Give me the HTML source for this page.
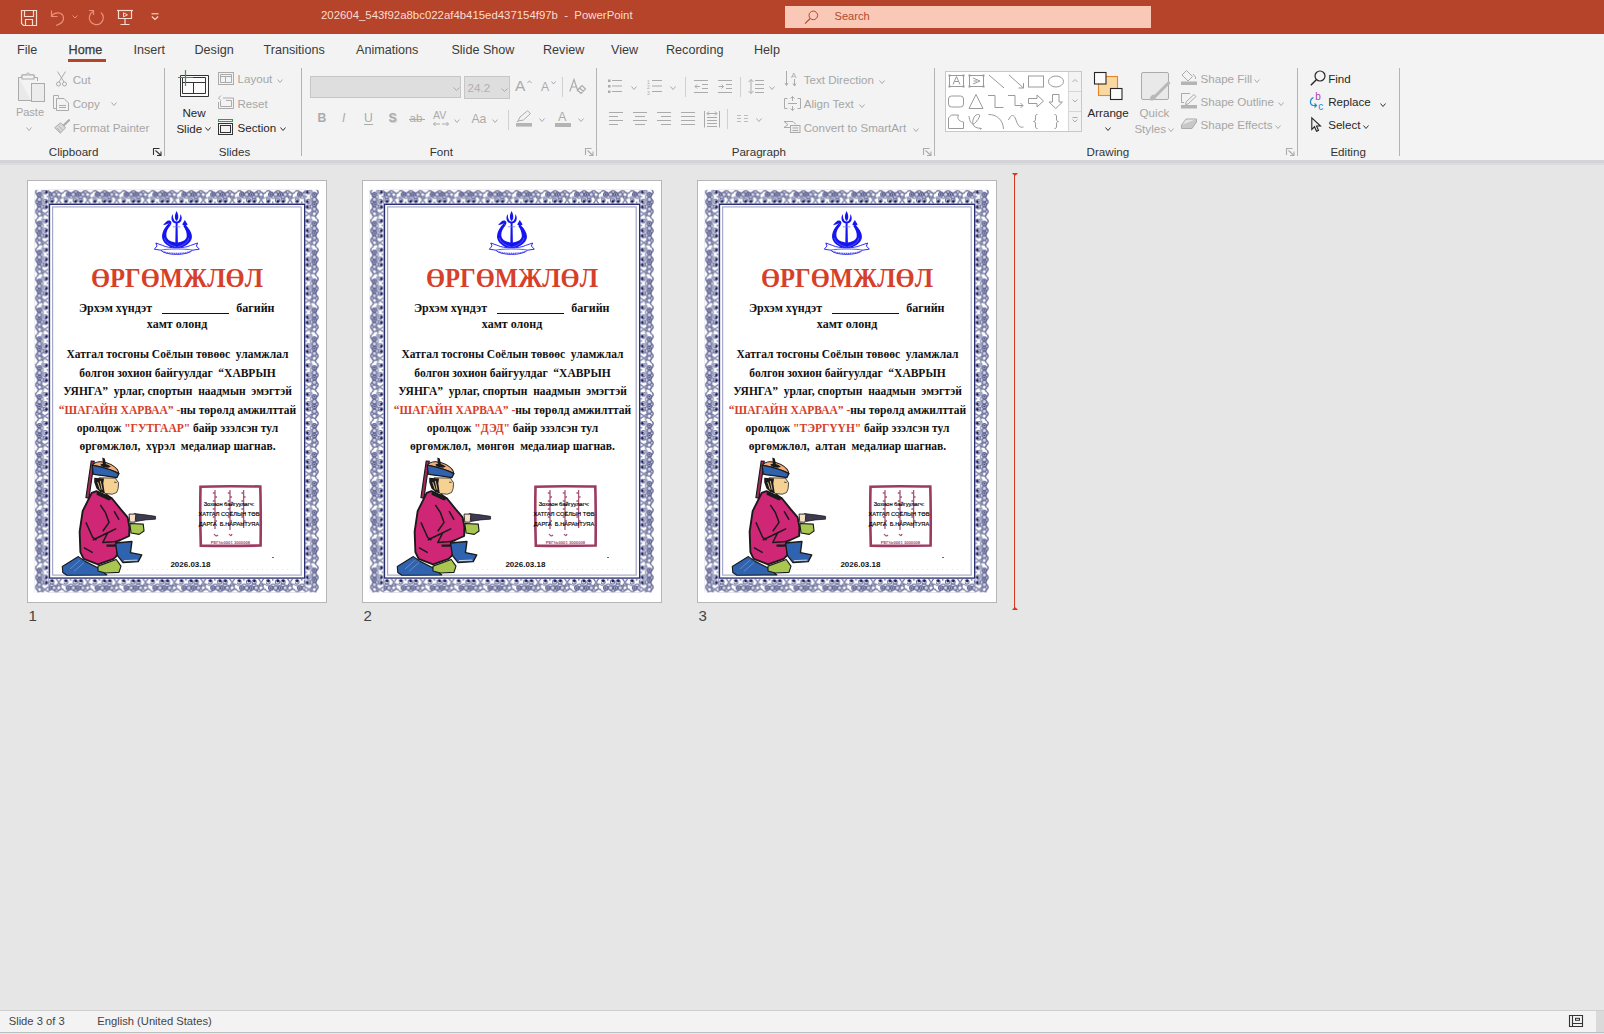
<!DOCTYPE html>
<html><head><meta charset="utf-8"><title>PowerPoint</title>
<style>
html,body{margin:0;padding:0;}
body{width:1604px;height:1034px;overflow:hidden;position:relative;background:#e6e6e6;font-family:"Liberation Sans",sans-serif;}
.t{position:absolute;white-space:pre;line-height:1;}
.r{position:absolute;}
.ic{position:absolute;overflow:visible;}
.slide{position:absolute;top:180px;width:298px;height:421px;border:1px solid #b4b4b4;background:#fff;overflow:hidden;}
.slide .t{}
</style></head><body>

<div class="r" style="left:0px;top:0px;width:1604px;height:34px;background:#b5442a;"></div>
<svg class="ic" style="left:21px;top:10px;" width="17" height="16" viewBox="0 0 17 16"><path d="M0.5 0.5 H15.5 V15.5 H2.5 L0.5 13.5 Z" fill="none" stroke="#f9dcd1" stroke-width="1.2"/><path d="M3.5 0.5 V6.5 H12.5 V0.5" fill="none" stroke="#f9dcd1" stroke-width="1.2"/><path d="M4.5 15.5 V9.5 H11.5 V15.5" fill="none" stroke="#f9dcd1" stroke-width="1.2"/></svg>
<svg class="ic" style="left:50px;top:10px;" width="16" height="16" viewBox="0 0 16 16"><path d="M1.5 6 C5 1.5 12.5 1.5 13.5 7.5 C14 11 12 13.5 6 15.5" fill="none" stroke="#ec8f7c" stroke-width="1.2"/><path d="M1.5 0.5 V6.5 H7.5" fill="none" stroke="#ec8f7c" stroke-width="1.2"/></svg>
<svg class="ic" style="left:71.5px;top:14.5px;" width="6" height="4" viewBox="0 0 6 4"><path d="M0.5 0.5 L3 3 L5.5 0.5" fill="none" stroke="#ec8f7c" stroke-width="1"/></svg>
<svg class="ic" style="left:88px;top:9.5px;" width="18" height="17" viewBox="0 0 18 17"><path d="M5 1.5 A7 7 0 1 0 13 2.5" fill="none" stroke="#ec8f7c" stroke-width="1.2"/><path d="M1 0.5 H5.5 V5" fill="none" stroke="#ec8f7c" stroke-width="1.2"/></svg>
<svg class="ic" style="left:117px;top:10px;" width="17" height="16" viewBox="0 0 17 16"><path d="M0 0.5 H16" stroke="#f9dcd1" stroke-width="1.2"/><path d="M1.5 0.5 V8.5 H14.5 V0.5" fill="none" stroke="#f9dcd1" stroke-width="1.2"/><path d="M6.5 2.8 L10.5 4.8 L6.5 6.8 Z" fill="none" stroke="#f9dcd1" stroke-width="1"/><path d="M8 8.5 V14 M3.5 14.5 H12.5" stroke="#f9dcd1" stroke-width="1.2"/></svg>
<svg class="ic" style="left:151px;top:13px;" width="8" height="8" viewBox="0 0 8 8"><path d="M0.5 0.8 H7.5" stroke="#f9dcd1" stroke-width="1.1"/><path d="M0.8 3.5 L4 6.5 L7.2 3.5" fill="none" stroke="#f9dcd1" stroke-width="1.1"/></svg>
<div class="t" style="left:321px;top:10.35px;font-size:11.4px;color:#f9dcd1;font-weight:400;font-family:'Liberation Sans', sans-serif;">202604_543f92a8bc022af4b415ed437154f97b  -  PowerPoint</div>
<div class="r" style="left:785px;top:6px;width:366px;height:22px;background:#f9c8b6;"></div>
<svg class="ic" style="left:804px;top:10px;" width="15" height="14" viewBox="0 0 15 14"><circle cx="9.3" cy="5.4" r="4.3" fill="none" stroke="#b04a30" stroke-width="1"/><path d="M6.2 8.5 L1 13.6" stroke="#b04a30" stroke-width="1.1"/></svg>
<div class="t" style="left:834.5px;top:11.40px;font-size:11.1px;color:#b04a30;font-weight:400;font-family:'Liberation Sans', sans-serif;">Search</div>
<div class="r" style="left:0px;top:34px;width:1604px;height:126px;background:#f3f3f3;"></div>
<div class="r" style="left:0px;top:160px;width:1604px;height:3px;background:#d3d3d8;"></div>
<div class="r" style="left:0px;top:163px;width:1604px;height:2px;background:#dcdcdc;"></div>
<div class="t" style="left:17px;top:43.93px;font-size:12.6px;color:#3b3b3b;font-weight:400;font-family:'Liberation Sans', sans-serif;">File</div>
<div class="t" style="left:68.6px;top:43.93px;font-size:12.6px;color:#3b3b3b;font-weight:400;font-family:'Liberation Sans', sans-serif;-webkit-text-stroke:0.25px #333;">Home</div>
<div class="t" style="left:133.4px;top:43.93px;font-size:12.6px;color:#3b3b3b;font-weight:400;font-family:'Liberation Sans', sans-serif;">Insert</div>
<div class="t" style="left:194.5px;top:43.93px;font-size:12.6px;color:#3b3b3b;font-weight:400;font-family:'Liberation Sans', sans-serif;">Design</div>
<div class="t" style="left:263.6px;top:43.93px;font-size:12.6px;color:#3b3b3b;font-weight:400;font-family:'Liberation Sans', sans-serif;">Transitions</div>
<div class="t" style="left:356px;top:43.93px;font-size:12.6px;color:#3b3b3b;font-weight:400;font-family:'Liberation Sans', sans-serif;">Animations</div>
<div class="t" style="left:451.4px;top:43.93px;font-size:12.6px;color:#3b3b3b;font-weight:400;font-family:'Liberation Sans', sans-serif;">Slide Show</div>
<div class="t" style="left:543px;top:43.93px;font-size:12.6px;color:#3b3b3b;font-weight:400;font-family:'Liberation Sans', sans-serif;">Review</div>
<div class="t" style="left:611px;top:43.93px;font-size:12.6px;color:#3b3b3b;font-weight:400;font-family:'Liberation Sans', sans-serif;">View</div>
<div class="t" style="left:666px;top:43.93px;font-size:12.6px;color:#3b3b3b;font-weight:400;font-family:'Liberation Sans', sans-serif;">Recording</div>
<div class="t" style="left:754px;top:43.93px;font-size:12.6px;color:#3b3b3b;font-weight:400;font-family:'Liberation Sans', sans-serif;">Help</div>
<div class="r" style="left:68.2px;top:59.2px;width:37.8px;height:2.8px;background:#b5442a;"></div>
<div class="r" style="left:164.0px;top:68px;width:1px;height:88px;background:#b4b4b4;"></div>
<div class="r" style="left:301.0px;top:68px;width:1px;height:88px;background:#b4b4b4;"></div>
<div class="r" style="left:595.9px;top:68px;width:1px;height:88px;background:#b4b4b4;"></div>
<div class="r" style="left:933.9px;top:68px;width:1px;height:88px;background:#b4b4b4;"></div>
<div class="r" style="left:1297.0px;top:68px;width:1px;height:88px;background:#b4b4b4;"></div>
<div class="r" style="left:1399.3px;top:68px;width:1px;height:88px;background:#b4b4b4;"></div>
<div class="t" style="left:48.8px;top:145.98px;font-size:11.6px;color:#333333;font-weight:400;font-family:'Liberation Sans', sans-serif;">Clipboard</div>
<div class="t" style="left:218.7px;top:145.98px;font-size:11.6px;color:#333333;font-weight:400;font-family:'Liberation Sans', sans-serif;">Slides</div>
<div class="t" style="left:429.7px;top:145.98px;font-size:11.6px;color:#333333;font-weight:400;font-family:'Liberation Sans', sans-serif;">Font</div>
<div class="t" style="left:731.7px;top:145.98px;font-size:11.6px;color:#333333;font-weight:400;font-family:'Liberation Sans', sans-serif;">Paragraph</div>
<div class="t" style="left:1086.6px;top:145.98px;font-size:11.6px;color:#333333;font-weight:400;font-family:'Liberation Sans', sans-serif;">Drawing</div>
<div class="t" style="left:1330.4px;top:145.98px;font-size:11.6px;color:#333333;font-weight:400;font-family:'Liberation Sans', sans-serif;">Editing</div>
<svg class="ic" style="left:153px;top:148px;" width="9" height="8" viewBox="0 0 9 8"><path d="M0.5 7 V0.5 H6.5" fill="none" stroke="#333" stroke-width="1.1"/><path d="M2.5 2.5 L8 7.5 M4 7.5 H8 V3.5" fill="none" stroke="#333" stroke-width="1.1"/></svg>
<svg class="ic" style="left:585px;top:148px;" width="9" height="8" viewBox="0 0 9 8"><path d="M0.5 7 V0.5 H6.5" fill="none" stroke="#ababab" stroke-width="1.1"/><path d="M2.5 2.5 L8 7.5 M4 7.5 H8 V3.5" fill="none" stroke="#ababab" stroke-width="1.1"/></svg>
<svg class="ic" style="left:923.2px;top:148px;" width="9" height="8" viewBox="0 0 9 8"><path d="M0.5 7 V0.5 H6.5" fill="none" stroke="#ababab" stroke-width="1.1"/><path d="M2.5 2.5 L8 7.5 M4 7.5 H8 V3.5" fill="none" stroke="#ababab" stroke-width="1.1"/></svg>
<svg class="ic" style="left:1286px;top:148px;" width="9" height="8" viewBox="0 0 9 8"><path d="M0.5 7 V0.5 H6.5" fill="none" stroke="#ababab" stroke-width="1.1"/><path d="M2.5 2.5 L8 7.5 M4 7.5 H8 V3.5" fill="none" stroke="#ababab" stroke-width="1.1"/></svg>
<svg class="ic" style="left:18px;top:72px;" width="28" height="30" viewBox="0 0 28 30"><path d="M0.5 5.5 H4 V3 H8 C8 0.5 12 0.5 12 3 H16 V5.5 H19.5 V9" fill="none" stroke="#ababab" stroke-width="1"/><path d="M0.5 5.5 V28.5 H13" fill="#e9e9e9" stroke="#ababab" stroke-width="1"/><rect x="4" y="3" width="12" height="4" fill="#f3f3f3" stroke="#ababab" stroke-width="1"/><rect x="13.5" y="11.5" width="13" height="18" fill="#ececec" stroke="#ababab" stroke-width="1"/></svg>
<div class="t" style="left:15.9px;top:107.29px;font-size:11.0px;color:#a6a6a6;font-weight:400;font-family:'Liberation Sans', sans-serif;">Paste</div>
<svg class="ic" style="left:26px;top:127px;" width="6" height="4" viewBox="0 0 6 4"><path d="M0.5 0.5 L3.0 3.5 L5.5 0.5" fill="none" stroke="#ababab" stroke-width="1"/></svg>
<svg class="ic" style="left:56px;top:71px;" width="11" height="16" viewBox="0 0 11 16"><path d="M1.5 0.5 L8 11 M9.5 0.5 L3 11" stroke="#ababab" stroke-width="1" fill="none"/><circle cx="2.5" cy="13" r="2" fill="none" stroke="#ababab" stroke-width="1"/><circle cx="8.5" cy="13" r="2" fill="none" stroke="#ababab" stroke-width="1"/></svg>
<div class="t" style="left:72.7px;top:73.88px;font-size:11.6px;color:#a6a6a6;font-weight:400;font-family:'Liberation Sans', sans-serif;">Cut</div>
<svg class="ic" style="left:53px;top:95px;" width="16" height="16" viewBox="0 0 16 16"><path d="M5.5 2.5 V0.5 H0.5 V13.5 H3.5" fill="none" stroke="#ababab" stroke-width="1"/><path d="M3.5 3.5 H11 L15.5 8 V15.5 H3.5 Z" fill="none" stroke="#ababab" stroke-width="1"/><path d="M6 10.5 H13 M6 12.5 H13" stroke="#ababab" stroke-width="1"/></svg>
<div class="t" style="left:72.7px;top:97.78px;font-size:11.6px;color:#a6a6a6;font-weight:400;font-family:'Liberation Sans', sans-serif;">Copy</div>
<svg class="ic" style="left:111.3px;top:102px;" width="6" height="4" viewBox="0 0 6 4"><path d="M0.5 0.5 L3.0 3.5 L5.5 0.5" fill="none" stroke="#ababab" stroke-width="1"/></svg>
<svg class="ic" style="left:53.5px;top:119px;" width="16" height="15" viewBox="0 0 16 15"><path d="M15 1.2 L9.5 6.5" stroke="#ababab" stroke-width="2.2" stroke-linecap="round"/><path d="M0.8 8.6 L6.6 3.8 L11.6 8.8 L6.2 14.2 Z" fill="#d9d9d9" stroke="#ababab" stroke-width="1"/><path d="M3 9 L6.8 12.6 M4.8 7.2 L8.6 10.8" stroke="#ababab" stroke-width="0.8"/></svg>
<div class="t" style="left:72.7px;top:121.58px;font-size:11.6px;color:#a6a6a6;font-weight:400;font-family:'Liberation Sans', sans-serif;">Format Painter</div>
<svg class="ic" style="left:177px;top:70px;" width="33" height="28" viewBox="0 0 33 28"><path d="M3.5 5.5 H31.5 V26.5 H3.5 Z" fill="#fbfbfb" stroke="#333" stroke-width="1"/><path d="M5.5 7.5 H28.5 V23.5 H5.5 Z M5.5 12.5 H28.5 M16.5 12.5 V23.5" fill="none" stroke="#333" stroke-width="1"/><path d="M8.5 0 V16 M1 7.5 H16" stroke="#2e9b4e" stroke-width="1.2"/></svg>
<div class="t" style="left:182.4px;top:106.78px;font-size:11.6px;color:#262626;font-weight:400;font-family:'Liberation Sans', sans-serif;">New</div>
<div class="t" style="left:176.4px;top:122.78px;font-size:11.6px;color:#262626;font-weight:400;font-family:'Liberation Sans', sans-serif;">Slide</div>
<svg class="ic" style="left:205px;top:127.3px;" width="6" height="4" viewBox="0 0 6 4"><path d="M0.5 0.5 L3.0 3.5 L5.5 0.5" fill="none" stroke="#333" stroke-width="1"/></svg>
<svg class="ic" style="left:218px;top:72px;" width="17" height="14" viewBox="0 0 17 14"><rect x="0.5" y="0.5" width="15" height="12" fill="none" stroke="#ababab" stroke-width="1"/><path d="M2.5 2.5 H13.5 V10.5 H2.5 Z M2.5 4.5 H13.5 M7.5 4.5 V10.5" fill="none" stroke="#ababab" stroke-width="1"/></svg>
<div class="t" style="left:237.5px;top:73.48px;font-size:11.6px;color:#a6a6a6;font-weight:400;font-family:'Liberation Sans', sans-serif;">Layout</div>
<svg class="ic" style="left:277px;top:79px;" width="6" height="4" viewBox="0 0 6 4"><path d="M0.5 0.5 L3.0 3.5 L5.5 0.5" fill="none" stroke="#ababab" stroke-width="1"/></svg>
<svg class="ic" style="left:218px;top:95px;" width="17" height="15" viewBox="0 0 17 15"><path d="M5 3 H15.5 V13.5 H0.5 V7" fill="none" stroke="#ababab" stroke-width="1"/><path d="M2.5 6 V11.5 H13.5 V5.5 H8" fill="none" stroke="#ababab" stroke-width="1"/><path d="M3 0.5 L0.5 3 L3 5.5" fill="none" stroke="#ababab" stroke-width="1"/></svg>
<div class="t" style="left:237.5px;top:97.58px;font-size:11.6px;color:#a6a6a6;font-weight:400;font-family:'Liberation Sans', sans-serif;">Reset</div>
<svg class="ic" style="left:218px;top:119px;" width="16" height="16" viewBox="0 0 16 16"><rect x="0.5" y="0.5" width="14" height="2" fill="none" stroke="#2e9b4e" stroke-width="1"/><rect x="0.5" y="4.5" width="14" height="11" fill="none" stroke="#333" stroke-width="1"/><rect x="2.5" y="6.5" width="10" height="7" fill="none" stroke="#333" stroke-width="1"/></svg>
<div class="t" style="left:237.5px;top:121.78px;font-size:11.6px;color:#262626;font-weight:400;font-family:'Liberation Sans', sans-serif;">Section</div>
<svg class="ic" style="left:280px;top:127px;" width="6" height="4" viewBox="0 0 6 4"><path d="M0.5 0.5 L3.0 3.5 L5.5 0.5" fill="none" stroke="#333" stroke-width="1"/></svg>
<div class="r" style="left:310px;top:76px;width:151px;height:22px;background:#dedede;border:1px solid #c6c6c6;box-sizing:border-box;"></div>
<svg class="ic" style="left:452.6px;top:87px;" width="7" height="4" viewBox="0 0 7 4"><path d="M0.5 0.5 L3.5 3.5 L6.5 0.5" fill="none" stroke="#ababab" stroke-width="1"/></svg>
<div class="r" style="left:464px;top:76px;width:46px;height:22.5px;background:#dedede;border:1px solid #c6c6c6;box-sizing:border-box;"></div>
<div class="t" style="left:467.6px;top:81.68px;font-size:11.6px;color:#b0b0b0;font-weight:400;font-family:'Liberation Sans', sans-serif;">24.2</div>
<svg class="ic" style="left:500.5px;top:87.5px;" width="7" height="4" viewBox="0 0 7 4"><path d="M0.5 0.5 L3.5 3.5 L6.5 0.5" fill="none" stroke="#ababab" stroke-width="1"/></svg>
<div class="t" style="left:515px;top:78.38px;font-size:15.5px;color:#ababab;font-weight:400;font-family:'Liberation Sans', sans-serif;">A</div>
<svg class="ic" style="left:527px;top:80px;" width="5" height="4" viewBox="0 0 5 4"><path d="M0.5 3 L2.5 0.8 L4.5 3" fill="none" stroke="#ababab" stroke-width="1"/></svg>
<div class="t" style="left:541px;top:81.17px;font-size:12.2px;color:#ababab;font-weight:400;font-family:'Liberation Sans', sans-serif;">A</div>
<svg class="ic" style="left:550.5px;top:81px;" width="5" height="3.5" viewBox="0 0 5 3.5"><path d="M0.5 0.5 L2.5 3.0 L4.5 0.5" fill="none" stroke="#ababab" stroke-width="1"/></svg>
<div class="r" style="left:562px;top:77px;width:1px;height:20px;background:#d0d0d0;"></div>
<svg class="ic" style="left:569px;top:79px;" width="18" height="16" viewBox="0 0 18 16"><path d="M0.8 12.5 L5 0.5 L9 12.5 M2.3 8 H7.5" fill="none" stroke="#ababab" stroke-width="1.2"/><path d="M8.5 11 L13 6.5 L16.5 10 L12 14.5 Z M10.5 9 L14.5 12.5" fill="none" stroke="#ababab" stroke-width="1.2"/></svg>
<div class="t" style="left:317.5px;top:111.97px;font-size:12.2px;color:#ababab;font-weight:700;font-family:'Liberation Sans', sans-serif;">B</div>
<div class="t" style="left:342px;top:111.97px;font-size:12.2px;color:#ababab;font-weight:400;font-family:'Liberation Sans', sans-serif;font-style:italic;">I</div>
<div class="t" style="left:364px;top:111.97px;font-size:12.2px;color:#ababab;font-weight:400;font-family:'Liberation Sans', sans-serif;">U</div>
<div class="r" style="left:364px;top:124px;width:9px;height:1px;background:#ababab;"></div>
<div class="t" style="left:388.5px;top:112.17px;font-size:12.2px;color:#ababab;font-weight:700;font-family:'Liberation Sans', sans-serif;text-shadow:1px 1px 1px #d0d0d0;">S</div>
<div class="t" style="left:409.5px;top:112.48px;font-size:11.6px;color:#ababab;font-weight:400;font-family:'Liberation Sans', sans-serif;">ab</div>
<div class="r" style="left:409px;top:119px;width:16px;height:1px;background:#ababab;"></div>
<div class="t" style="left:433px;top:110.03px;font-size:10.6px;color:#ababab;font-weight:400;font-family:'Liberation Sans', sans-serif;">AV</div>
<svg class="ic" style="left:433px;top:121px;" width="16" height="6" viewBox="0 0 16 6"><path d="M0.5 3 H7 M0.5 3 L2.5 1 M0.5 3 L2.5 5 M9 3 H15.5 M15.5 3 L13.5 1 M15.5 3 L13.5 5" fill="none" stroke="#ababab" stroke-width="1"/></svg>
<svg class="ic" style="left:454px;top:118.5px;" width="6" height="4" viewBox="0 0 6 4"><path d="M0.5 0.5 L3.0 3.5 L5.5 0.5" fill="none" stroke="#ababab" stroke-width="1"/></svg>
<div class="t" style="left:471.4px;top:113.07px;font-size:12.2px;color:#ababab;font-weight:400;font-family:'Liberation Sans', sans-serif;">Aa</div>
<svg class="ic" style="left:491.7px;top:118.5px;" width="6" height="4" viewBox="0 0 6 4"><path d="M0.5 0.5 L3.0 3.5 L5.5 0.5" fill="none" stroke="#ababab" stroke-width="1"/></svg>
<div class="r" style="left:508px;top:110px;width:1px;height:20px;background:#d0d0d0;"></div>
<svg class="ic" style="left:516px;top:110px;" width="17" height="17" viewBox="0 0 17 17"><path d="M2 11 L4 7 L11.5 0.8 L14.5 3.5 L7.5 10 Z" fill="none" stroke="#ababab" stroke-width="1"/><path d="M2 11 L1 12" stroke="#ababab" stroke-width="1"/><rect x="0" y="13" width="16" height="3.6" fill="#b4b4b4"/></svg>
<svg class="ic" style="left:538.7px;top:118px;" width="6" height="4" viewBox="0 0 6 4"><path d="M0.5 0.5 L3.0 3.5 L5.5 0.5" fill="none" stroke="#ababab" stroke-width="1"/></svg>
<div class="t" style="left:558px;top:110.83px;font-size:12.6px;color:#ababab;font-weight:400;font-family:'Liberation Sans', sans-serif;">A</div>
<div class="r" style="left:555px;top:123px;width:16px;height:3.6px;background:#b4b4b4;"></div>
<svg class="ic" style="left:577.8px;top:118px;" width="6" height="4" viewBox="0 0 6 4"><path d="M0.5 0.5 L3.0 3.5 L5.5 0.5" fill="none" stroke="#ababab" stroke-width="1"/></svg>
<svg class="ic" style="left:608px;top:79px;" width="16" height="15" viewBox="0 0 16 15"><rect x="0" y="0.5" width="2.5" height="2.5" fill="#ababab"/><rect x="0" y="6" width="2.5" height="2.5" fill="#ababab"/><rect x="0" y="11.5" width="2.5" height="2.5" fill="#ababab"/><path d="M4 1.5 H14" stroke="#ababab" stroke-width="1"/><path d="M4 7 H14" stroke="#ababab" stroke-width="1"/><path d="M4 12.5 H14" stroke="#ababab" stroke-width="1"/></svg>
<svg class="ic" style="left:630.7px;top:86px;" width="6" height="4" viewBox="0 0 6 4"><path d="M0.5 0.5 L3.0 3.5 L5.5 0.5" fill="none" stroke="#ababab" stroke-width="1"/></svg>
<svg class="ic" style="left:647px;top:79px;" width="16" height="16" viewBox="0 0 16 16"><text x="0" y="4.5" font-size="5" fill="#ababab" font-family="Liberation Sans">1</text><text x="0" y="10" font-size="5" fill="#ababab" font-family="Liberation Sans">2</text><text x="0" y="15.5" font-size="5" fill="#ababab" font-family="Liberation Sans">3</text><path d="M5 1.5 H15" stroke="#ababab" stroke-width="1"/><path d="M5 7 H15" stroke="#ababab" stroke-width="1"/><path d="M5 12.5 H15" stroke="#ababab" stroke-width="1"/></svg>
<svg class="ic" style="left:669.6px;top:86px;" width="6" height="4" viewBox="0 0 6 4"><path d="M0.5 0.5 L3.0 3.5 L5.5 0.5" fill="none" stroke="#ababab" stroke-width="1"/></svg>
<div class="r" style="left:685px;top:77px;width:1px;height:20px;background:#d0d0d0;"></div>
<svg class="ic" style="left:694px;top:80px;" width="15" height="14" viewBox="0 0 15 14"><path d="M0 0.5 H14" stroke="#ababab" stroke-width="1"/><path d="M0 12.5 H14" stroke="#ababab" stroke-width="1"/><path d="M8 4.5 H14" stroke="#ababab" stroke-width="1"/><path d="M8 8.5 H14" stroke="#ababab" stroke-width="1"/><path d="M6 6.5 H1 M3 4.5 L1 6.5 L3 8.5" fill="none" stroke="#ababab" stroke-width="1"/></svg>
<svg class="ic" style="left:718px;top:80px;" width="15" height="14" viewBox="0 0 15 14"><path d="M0 0.5 H14" stroke="#ababab" stroke-width="1"/><path d="M0 12.5 H14" stroke="#ababab" stroke-width="1"/><path d="M8 4.5 H14" stroke="#ababab" stroke-width="1"/><path d="M8 8.5 H14" stroke="#ababab" stroke-width="1"/><path d="M0.5 6.5 H5.5 M3.5 4.5 L5.5 6.5 L3.5 8.5" fill="none" stroke="#ababab" stroke-width="1"/></svg>
<div class="r" style="left:740px;top:77px;width:1px;height:20px;background:#d0d0d0;"></div>
<svg class="ic" style="left:747.5px;top:79px;" width="17" height="16" viewBox="0 0 17 16"><path d="M7 1.5 H16" stroke="#ababab" stroke-width="1"/><path d="M7 5.5 H16" stroke="#ababab" stroke-width="1"/><path d="M7 9.5 H16" stroke="#ababab" stroke-width="1"/><path d="M7 13.5 H16" stroke="#ababab" stroke-width="1"/><path d="M3 0.5 V14.5 M0.5 3 L3 0.5 L5.5 3 M0.5 12 L3 14.5 L5.5 12" fill="none" stroke="#ababab" stroke-width="1"/></svg>
<svg class="ic" style="left:768.7px;top:86px;" width="6" height="4" viewBox="0 0 6 4"><path d="M0.5 0.5 L3.0 3.5 L5.5 0.5" fill="none" stroke="#ababab" stroke-width="1"/></svg>
<svg class="ic" style="left:609px;top:112px;" width="14" height="13" viewBox="0 0 14 13"><path d="M0 0.5 H14 M0 4.5 H9 M0 8.5 H14 M0 12.5 H9" stroke="#ababab" stroke-width="1"/></svg>
<svg class="ic" style="left:633px;top:112px;" width="14" height="13" viewBox="0 0 14 13"><path d="M0 0.5 H14 M2 4.5 H12 M0 8.5 H14 M2 12.5 H12" stroke="#ababab" stroke-width="1"/></svg>
<svg class="ic" style="left:657px;top:112px;" width="14" height="13" viewBox="0 0 14 13"><path d="M0 0.5 H14 M4 4.5 H14 M0 8.5 H14 M4 12.5 H14" stroke="#ababab" stroke-width="1"/></svg>
<svg class="ic" style="left:681px;top:112px;" width="14" height="13" viewBox="0 0 14 13"><path d="M0 0.5 H14 M0 4.5 H14 M0 8.5 H14 M0 12.5 H14" stroke="#ababab" stroke-width="1"/></svg>
<svg class="ic" style="left:704px;top:110.5px;" width="17" height="17" viewBox="0 0 17 17"><path d="M0.5 0 V16.5 M15.5 0 V16.5 M3 6.5 H13 M3 9.5 H13 M3 12.5 H13 M3 15.5 H13 M3 2.5 H13 M3 2.5 L5 0.5 M3 2.5 L5 4.5 M13 2.5 L11 0.5 M13 2.5 L11 4.5" fill="none" stroke="#ababab" stroke-width="1"/></svg>
<div class="r" style="left:727px;top:109px;width:1px;height:20px;background:#d0d0d0;"></div>
<svg class="ic" style="left:737px;top:115px;" width="12" height="7" viewBox="0 0 12 7"><path d="M0 0.5 H4 M0 3.5 H4 M0 6.5 H4 M7 0.5 H11 M7 3.5 H11 M7 6.5 H11" stroke="#bdbdbd" stroke-width="1"/></svg>
<svg class="ic" style="left:755.5px;top:118px;" width="6" height="4" viewBox="0 0 6 4"><path d="M0.5 0.5 L3.0 3.5 L5.5 0.5" fill="none" stroke="#ababab" stroke-width="1"/></svg>
<svg class="ic" style="left:785px;top:71px;" width="15" height="16" viewBox="0 0 15 16"><path d="M1.5 0 V14.5 M0 12 L1.5 14.5 L3 12" fill="none" stroke="#ababab" stroke-width="1"/><text x="6" y="7" font-size="8" fill="#ababab" font-family="Liberation Sans">A</text><path d="M9.5 8 V15 M8 12.5 L9.5 15 L11 12.5" fill="none" stroke="#ababab" stroke-width="1"/></svg>
<div class="t" style="left:803.7px;top:73.68px;font-size:11.6px;color:#a6a6a6;font-weight:400;font-family:'Liberation Sans', sans-serif;">Text Direction</div>
<svg class="ic" style="left:879.4px;top:79.5px;" width="6" height="4" viewBox="0 0 6 4"><path d="M0.5 0.5 L3.0 3.5 L5.5 0.5" fill="none" stroke="#ababab" stroke-width="1"/></svg>
<svg class="ic" style="left:783.5px;top:95.5px;" width="17" height="15" viewBox="0 0 17 15"><path d="M3.5 2.5 H0.5 V12.5 H3.5 M13.5 2.5 H16.5 V12.5 H13.5 M4 7.5 H13" fill="none" stroke="#ababab" stroke-width="1"/><path d="M8.5 0.5 V5 M6.5 2.5 L8.5 0.5 L10.5 2.5 M8.5 10 V14.5 M6.5 12.5 L8.5 14.5 L10.5 12.5" fill="none" stroke="#ababab" stroke-width="1"/></svg>
<div class="t" style="left:803.7px;top:97.58px;font-size:11.6px;color:#a6a6a6;font-weight:400;font-family:'Liberation Sans', sans-serif;">Align Text</div>
<svg class="ic" style="left:859.2px;top:103.5px;" width="6" height="4" viewBox="0 0 6 4"><path d="M0.5 0.5 L3.0 3.5 L5.5 0.5" fill="none" stroke="#ababab" stroke-width="1"/></svg>
<svg class="ic" style="left:784px;top:121px;" width="17" height="12" viewBox="0 0 17 12"><path d="M0 0.5 H9 L12 3.5 M0 0.5 L4 3.5 L0 6.5 H6" fill="none" stroke="#ababab" stroke-width="1"/><rect x="6.5" y="4.5" width="9.5" height="7" fill="#eeeeee" stroke="#ababab" stroke-width="1"/><path d="M8.5 7 H14 M8.5 9.5 H14" stroke="#ababab" stroke-width="1"/></svg>
<div class="t" style="left:803.7px;top:121.78px;font-size:11.6px;color:#a6a6a6;font-weight:400;font-family:'Liberation Sans', sans-serif;">Convert to SmartArt</div>
<svg class="ic" style="left:913.4px;top:127.5px;" width="6" height="4" viewBox="0 0 6 4"><path d="M0.5 0.5 L3.0 3.5 L5.5 0.5" fill="none" stroke="#ababab" stroke-width="1"/></svg>
<div class="r" style="left:944.5px;top:70.5px;width:137px;height:61px;background:#ffffff;border:1px solid #c8c8c8;box-sizing:border-box;"></div>
<div class="r" style="left:1067.5px;top:71.5px;width:12.5px;height:59px;background:#f3f3f3;border-left:1px solid #d6d6d6;"></div>
<div class="r" style="left:1067.5px;top:90.5px;width:13px;height:1px;background:#d6d6d6;"></div>
<div class="r" style="left:1067.5px;top:110.5px;width:13px;height:1px;background:#d6d6d6;"></div>
<svg class="ic" style="left:1072px;top:79px;" width="6" height="4" viewBox="0 0 6 4"><path d="M0.5 3 L3 0.5 L5.5 3" fill="none" stroke="#ababab" stroke-width="1"/></svg>
<svg class="ic" style="left:1072px;top:99px;" width="6" height="3.5" viewBox="0 0 6 3.5"><path d="M0.5 0.5 L3.0 3.0 L5.5 0.5" fill="none" stroke="#ababab" stroke-width="1"/></svg>
<svg class="ic" style="left:1072px;top:117px;" width="6" height="6" viewBox="0 0 6 6"><path d="M0.5 0.5 H5.5 M0.5 2.5 L3 5 L5.5 2.5" fill="none" stroke="#ababab" stroke-width="1"/></svg>
<svg class="ic" style="left:948px;top:73.5px;" width="17" height="16" viewBox="0 0 17 16"><rect x="1.5" y="1.5" width="14" height="11" fill="none" stroke="#9a9a9a" stroke-width="1"/><rect x="0.5" y="0.5" width="2" height="2" fill="#9a9a9a"/><rect x="0.5" y="11.5" width="2" height="2" fill="#9a9a9a"/><rect x="14.5" y="0.5" width="2" height="2" fill="#9a9a9a"/><rect x="14.5" y="11.5" width="2" height="2" fill="#9a9a9a"/><path d="M5 10.5 L8.5 2.5 L12 10.5 M6.3 7.5 H10.7" fill="none" stroke="#9a9a9a" stroke-width="1"/></svg>
<svg class="ic" style="left:968px;top:73.5px;" width="17" height="16" viewBox="0 0 17 16"><rect x="1.5" y="1.5" width="14" height="11" fill="none" stroke="#9a9a9a" stroke-width="1"/><rect x="0.5" y="0.5" width="2" height="2" fill="#9a9a9a"/><rect x="0.5" y="11.5" width="2" height="2" fill="#9a9a9a"/><rect x="14.5" y="0.5" width="2" height="2" fill="#9a9a9a"/><rect x="14.5" y="11.5" width="2" height="2" fill="#9a9a9a"/><path d="M5 4 L12 7 L5 10 M5.5 7 H9" fill="none" stroke="#9a9a9a" stroke-width="1"/></svg>
<svg class="ic" style="left:988px;top:73.5px;" width="17" height="16" viewBox="0 0 17 16"><path d="M1 1 L16 14" stroke="#9a9a9a" stroke-width="1"/></svg>
<svg class="ic" style="left:1008px;top:73.5px;" width="17" height="16" viewBox="0 0 17 16"><path d="M1 1 L15.5 14 M15.5 9 V14 H10.5" fill="none" stroke="#9a9a9a" stroke-width="1"/></svg>
<svg class="ic" style="left:1028px;top:73.5px;" width="17" height="16" viewBox="0 0 17 16"><rect x="0.5" y="2" width="15" height="11" fill="none" stroke="#9a9a9a" stroke-width="1"/></svg>
<svg class="ic" style="left:1048px;top:73.5px;" width="17" height="16" viewBox="0 0 17 16"><ellipse cx="8" cy="7.5" rx="7.5" ry="5.5" fill="none" stroke="#9a9a9a" stroke-width="1"/></svg>
<svg class="ic" style="left:948px;top:93.5px;" width="17" height="16" viewBox="0 0 17 16"><rect x="0.5" y="2" width="15" height="11" rx="3" fill="none" stroke="#9a9a9a" stroke-width="1"/></svg>
<svg class="ic" style="left:968px;top:93.5px;" width="17" height="16" viewBox="0 0 17 16"><path d="M8 0.5 L15 14.5 H1 Z" fill="none" stroke="#9a9a9a" stroke-width="1"/></svg>
<svg class="ic" style="left:988px;top:93.5px;" width="17" height="16" viewBox="0 0 17 16"><path d="M0 1.5 H7 V13.5 H15.5" fill="none" stroke="#9a9a9a" stroke-width="1"/></svg>
<svg class="ic" style="left:1008px;top:93.5px;" width="17" height="16" viewBox="0 0 17 16"><path d="M0 1.5 H7 V11.5 H15 M12.5 9 L15 11.5 L12.5 14" fill="none" stroke="#9a9a9a" stroke-width="1"/></svg>
<svg class="ic" style="left:1028px;top:93.5px;" width="17" height="16" viewBox="0 0 17 16"><path d="M0.5 4.5 H9 V1 L15.5 7 L9 13 V9.5 H0.5 Z" fill="none" stroke="#9a9a9a" stroke-width="1"/></svg>
<svg class="ic" style="left:1048px;top:93.5px;" width="17" height="16" viewBox="0 0 17 16"><path d="M4.5 0.5 H11 V8 H14.5 L7.8 14.5 L1 8 H4.5 Z" fill="none" stroke="#9a9a9a" stroke-width="1"/></svg>
<svg class="ic" style="left:948px;top:113.5px;" width="17" height="16" viewBox="0 0 17 16"><path d="M3.5 1 H10.5 C9 4 10 7 15.5 8 V14.5 H0.5 V4 Z" fill="none" stroke="#9a9a9a" stroke-width="1"/></svg>
<svg class="ic" style="left:968px;top:113.5px;" width="17" height="16" viewBox="0 0 17 16"><path d="M1 2 C2 10 5 12 8 8 C12 3 13 0 9.5 0.5 C6 1 3 8 6 12 C8 14.5 12 14 13.5 14.5 L12 15.5" fill="none" stroke="#9a9a9a" stroke-width="1"/></svg>
<svg class="ic" style="left:988px;top:113.5px;" width="17" height="16" viewBox="0 0 17 16"><path d="M0.5 0.5 C8 0.5 15 5 15.5 15" fill="none" stroke="#9a9a9a" stroke-width="1"/></svg>
<svg class="ic" style="left:1008px;top:113.5px;" width="17" height="16" viewBox="0 0 17 16"><path d="M0.5 6 C3 0 6 0 8 6 C10 12 12 14 15.5 13" fill="none" stroke="#9a9a9a" stroke-width="1"/></svg>
<svg class="ic" style="left:1028px;top:113.5px;" width="17" height="16" viewBox="0 0 17 16"><path d="M9.5 0.5 C7 0.5 7.5 2 7.5 5 C7.5 7 6.5 7.5 5.5 7.5 C6.5 7.5 7.5 8 7.5 10 C7.5 13 7 14.5 9.5 14.5" fill="none" stroke="#9a9a9a" stroke-width="1"/></svg>
<svg class="ic" style="left:1048px;top:113.5px;" width="17" height="16" viewBox="0 0 17 16"><path d="M6.5 0.5 C9 0.5 8.5 2 8.5 5 C8.5 7 9.5 7.5 10.5 7.5 C9.5 7.5 8.5 8 8.5 10 C8.5 13 9 14.5 6.5 14.5" fill="none" stroke="#9a9a9a" stroke-width="1"/></svg>
<svg class="ic" style="left:1094px;top:72px;" width="29" height="28" viewBox="0 0 29 28"><rect x="4.5" y="4.5" width="19" height="19" fill="#fad9a1" stroke="#e8832a" stroke-width="1.1"/><rect x="0.5" y="0.5" width="11.5" height="11.5" fill="#fafafa" stroke="#262626" stroke-width="1.1"/><rect x="16.5" y="16.5" width="11.5" height="11" fill="#fafafa" stroke="#262626" stroke-width="1.1"/></svg>
<div class="t" style="left:1087.5px;top:107.08px;font-size:11.6px;color:#262626;font-weight:400;font-family:'Liberation Sans', sans-serif;">Arrange</div>
<svg class="ic" style="left:1105px;top:127px;" width="6" height="4" viewBox="0 0 6 4"><path d="M0.5 0.5 L3.0 3.5 L5.5 0.5" fill="none" stroke="#333" stroke-width="1"/></svg>
<svg class="ic" style="left:1141px;top:72px;" width="31" height="30" viewBox="0 0 31 30"><rect x="0.5" y="0.5" width="27" height="27" rx="1.5" fill="#e9e9e9" stroke="#ababab" stroke-width="1"/><path d="M28.5 10 L14 24.5" stroke="#b8b8b8" stroke-width="3"/><path d="M14 23 C11 22 8 25 9.5 28.5 C13 29 15.5 27 15 24" fill="#b8b8b8"/></svg>
<div class="t" style="left:1139.6px;top:107.18px;font-size:11.6px;color:#a6a6a6;font-weight:400;font-family:'Liberation Sans', sans-serif;">Quick</div>
<div class="t" style="left:1134.4px;top:122.78px;font-size:11.6px;color:#a6a6a6;font-weight:400;font-family:'Liberation Sans', sans-serif;">Styles</div>
<svg class="ic" style="left:1168px;top:128px;" width="6" height="4" viewBox="0 0 6 4"><path d="M0.5 0.5 L3.0 3.5 L5.5 0.5" fill="none" stroke="#ababab" stroke-width="1"/></svg>
<svg class="ic" style="left:1181px;top:70px;" width="17" height="16" viewBox="0 0 17 16"><path d="M5.5 0.5 L11.5 6.5 L7 11 L1 5 Z" fill="none" stroke="#ababab" stroke-width="1"/><path d="M12 4 L14.5 7 V9" fill="none" stroke="#ababab" stroke-width="1"/><rect x="0" y="11.5" width="16" height="3.5" fill="#b4b4b4"/></svg>
<div class="t" style="left:1200.5px;top:72.98px;font-size:11.6px;color:#a6a6a6;font-weight:400;font-family:'Liberation Sans', sans-serif;">Shape Fill</div>
<svg class="ic" style="left:1254.4px;top:78.5px;" width="6" height="4" viewBox="0 0 6 4"><path d="M0.5 0.5 L3.0 3.5 L5.5 0.5" fill="none" stroke="#ababab" stroke-width="1"/></svg>
<svg class="ic" style="left:1181px;top:93px;" width="17" height="16" viewBox="0 0 17 16"><path d="M0.5 0.5 H9 M0.5 0.5 V9.5 H3" fill="none" stroke="#ababab" stroke-width="1"/><path d="M5 9 L13 1.5 L15 3.5 L7 11 L4.5 11.5 Z" fill="none" stroke="#ababab" stroke-width="1"/><rect x="0" y="12" width="16" height="3.5" fill="#b4b4b4"/></svg>
<div class="t" style="left:1200.5px;top:96.08px;font-size:11.6px;color:#a6a6a6;font-weight:400;font-family:'Liberation Sans', sans-serif;">Shape Outline</div>
<svg class="ic" style="left:1278.4px;top:101.5px;" width="6" height="4" viewBox="0 0 6 4"><path d="M0.5 0.5 L3.0 3.5 L5.5 0.5" fill="none" stroke="#ababab" stroke-width="1"/></svg>
<svg class="ic" style="left:1181px;top:118px;" width="16" height="12" viewBox="0 0 16 12"><path d="M0.5 7 L5 1 H15.5 L11 8 H0.5 Z" fill="#e6e6e6" stroke="#ababab" stroke-width="1"/><path d="M0.5 7 V10.5 H11 L15.5 4 V1" fill="#c8c8c8" stroke="#ababab" stroke-width="1"/></svg>
<div class="t" style="left:1200.5px;top:118.98px;font-size:11.6px;color:#a6a6a6;font-weight:400;font-family:'Liberation Sans', sans-serif;">Shape Effects</div>
<svg class="ic" style="left:1275px;top:124.5px;" width="6" height="4" viewBox="0 0 6 4"><path d="M0.5 0.5 L3.0 3.5 L5.5 0.5" fill="none" stroke="#ababab" stroke-width="1"/></svg>
<svg class="ic" style="left:1310px;top:70px;" width="16" height="16" viewBox="0 0 16 16"><circle cx="10" cy="6" r="5" fill="none" stroke="#262626" stroke-width="1.2"/><path d="M6.3 9.7 L0.8 15.2" stroke="#262626" stroke-width="1.4"/></svg>
<div class="t" style="left:1328.2px;top:73.08px;font-size:11.6px;color:#262626;font-weight:400;font-family:'Liberation Sans', sans-serif;">Find</div>
<svg class="ic" style="left:1308.5px;top:92px;" width="16" height="18" viewBox="0 0 16 18"><text x="6.3" y="8" font-size="10" fill="#b238b6" font-family="Liberation Sans">b</text><text x="9.2" y="17.5" font-size="10" fill="#1f8ad0" font-family="Liberation Sans">c</text><path d="M4.5 5.5 C0.5 7 0.5 12.5 4 13.5 L7.5 13.5 M5.5 11.5 L7.5 13.5 L5.5 15.5" fill="none" stroke="#1f8ad0" stroke-width="1.2"/></svg>
<div class="t" style="left:1328.2px;top:96.18px;font-size:11.6px;color:#262626;font-weight:400;font-family:'Liberation Sans', sans-serif;">Replace</div>
<svg class="ic" style="left:1380px;top:102.5px;" width="6" height="4" viewBox="0 0 6 4"><path d="M0.5 0.5 L3.0 3.5 L5.5 0.5" fill="none" stroke="#333" stroke-width="1"/></svg>
<svg class="ic" style="left:1311px;top:117px;" width="11" height="15" viewBox="0 0 11 15"><path d="M0.8 0.8 L9.5 9 H5.5 L7.5 13.5 L5.5 14.3 L3.5 9.8 L0.8 12.5 Z" fill="none" stroke="#262626" stroke-width="1.1"/></svg>
<div class="t" style="left:1328.2px;top:119.38px;font-size:11.6px;color:#262626;font-weight:400;font-family:'Liberation Sans', sans-serif;">Select</div>
<svg class="ic" style="left:1363px;top:125px;" width="6" height="4" viewBox="0 0 6 4"><path d="M0.5 0.5 L3.0 3.5 L5.5 0.5" fill="none" stroke="#333" stroke-width="1"/></svg>
<svg width="0" height="0" style="position:absolute;left:0;top:0"><defs><pattern id="ornT" x="7.8" y="9.8" width="28.9" height="14.4" patternUnits="userSpaceOnUse"><path d="M0 2.2 Q2.4 -0.6 4.8 2.2 T9.6 2.2 T14.4 2.2 T19.2 2.2 T24 2.2 T28.9 2.2" fill="none" stroke="#7478a0" stroke-width="1.5"/><circle cx="4.8" cy="4.6" r="2.2" fill="#b9bcd2" stroke="#5d6190" stroke-width="1.3"/><circle cx="9.6" cy="4.6" r="2.2" fill="#d6d8e6" stroke="#6a6e99" stroke-width="1.3"/><circle cx="14.4" cy="4.6" r="2.2" fill="#b9bcd2" stroke="#5d6190" stroke-width="1.3"/><circle cx="19.2" cy="4.6" r="2.2" fill="#d6d8e6" stroke="#6a6e99" stroke-width="1.3"/><circle cx="24" cy="4.6" r="2.2" fill="none" stroke="#7478a0" stroke-width="1.2"/><circle cx="4.8" cy="4.6" r="0.8" fill="#2a2e6e"/><circle cx="14.4" cy="4.6" r="0.8" fill="#2a2e6e"/><path d="M0 7.6 Q2.4 5.8 4.8 7.6 T9.6 7.6 T14.4 7.6 T19.2 7.6 T24 7.6 T28.9 7.6" fill="none" stroke="#7f83aa" stroke-width="1.1"/><circle cx="2" cy="10.6" r="2.1" fill="none" stroke="#6e729c" stroke-width="1.1"/><circle cx="11.5" cy="10.6" r="2.1" fill="none" stroke="#6e729c" stroke-width="1.1"/><circle cx="17" cy="10.6" r="2.1" fill="none" stroke="#6e729c" stroke-width="1.1"/><circle cx="2.3" cy="11.5" r="1.35" fill="#161a5c"/><circle cx="11.8" cy="11.5" r="1.35" fill="#161a5c"/><circle cx="17.3" cy="11.5" r="1.35" fill="#161a5c"/><circle cx="6.8" cy="12.6" r="0.8" fill="#5d6190"/><path d="M21.5 6.5 L26.5 13.5 M26.5 6.5 L21.5 13.5" stroke="#6a6e99" stroke-width="1.2"/><path d="M24 8 L25.4 10 L24 12 L22.6 10 Z" fill="#8e91b3"/><path d="M0 13.9 H28.9" stroke="#8c8fb3" stroke-width="0.9"/></pattern><pattern id="ornB" x="7.8" y="398.1" width="28.9" height="14.4" patternUnits="userSpaceOnUse"><g transform="translate(0 14.4) scale(1 -1)"><path d="M0 2.2 Q2.4 -0.6 4.8 2.2 T9.6 2.2 T14.4 2.2 T19.2 2.2 T24 2.2 T28.9 2.2" fill="none" stroke="#7478a0" stroke-width="1.5"/><circle cx="4.8" cy="4.6" r="2.2" fill="#b9bcd2" stroke="#5d6190" stroke-width="1.3"/><circle cx="9.6" cy="4.6" r="2.2" fill="#d6d8e6" stroke="#6a6e99" stroke-width="1.3"/><circle cx="14.4" cy="4.6" r="2.2" fill="#b9bcd2" stroke="#5d6190" stroke-width="1.3"/><circle cx="19.2" cy="4.6" r="2.2" fill="#d6d8e6" stroke="#6a6e99" stroke-width="1.3"/><circle cx="24" cy="4.6" r="2.2" fill="none" stroke="#7478a0" stroke-width="1.2"/><circle cx="4.8" cy="4.6" r="0.8" fill="#2a2e6e"/><circle cx="14.4" cy="4.6" r="0.8" fill="#2a2e6e"/><path d="M0 7.6 Q2.4 5.8 4.8 7.6 T9.6 7.6 T14.4 7.6 T19.2 7.6 T24 7.6 T28.9 7.6" fill="none" stroke="#7f83aa" stroke-width="1.1"/><circle cx="2" cy="10.6" r="2.1" fill="none" stroke="#6e729c" stroke-width="1.1"/><circle cx="11.5" cy="10.6" r="2.1" fill="none" stroke="#6e729c" stroke-width="1.1"/><circle cx="17" cy="10.6" r="2.1" fill="none" stroke="#6e729c" stroke-width="1.1"/><circle cx="2.3" cy="11.5" r="1.35" fill="#161a5c"/><circle cx="11.8" cy="11.5" r="1.35" fill="#161a5c"/><circle cx="17.3" cy="11.5" r="1.35" fill="#161a5c"/><circle cx="6.8" cy="12.6" r="0.8" fill="#5d6190"/><path d="M21.5 6.5 L26.5 13.5 M26.5 6.5 L21.5 13.5" stroke="#6a6e99" stroke-width="1.2"/><path d="M24 8 L25.4 10 L24 12 L22.6 10 Z" fill="#8e91b3"/><path d="M0 13.9 H28.9" stroke="#8c8fb3" stroke-width="0.9"/></g></pattern><pattern id="ornL" x="7.8" y="9.8" width="14.4" height="28.9" patternUnits="userSpaceOnUse"><g transform="matrix(0 1 1 0 0 0)"><path d="M0 2.2 Q2.4 -0.6 4.8 2.2 T9.6 2.2 T14.4 2.2 T19.2 2.2 T24 2.2 T28.9 2.2" fill="none" stroke="#7478a0" stroke-width="1.5"/><circle cx="4.8" cy="4.6" r="2.2" fill="#b9bcd2" stroke="#5d6190" stroke-width="1.3"/><circle cx="9.6" cy="4.6" r="2.2" fill="#d6d8e6" stroke="#6a6e99" stroke-width="1.3"/><circle cx="14.4" cy="4.6" r="2.2" fill="#b9bcd2" stroke="#5d6190" stroke-width="1.3"/><circle cx="19.2" cy="4.6" r="2.2" fill="#d6d8e6" stroke="#6a6e99" stroke-width="1.3"/><circle cx="24" cy="4.6" r="2.2" fill="none" stroke="#7478a0" stroke-width="1.2"/><circle cx="4.8" cy="4.6" r="0.8" fill="#2a2e6e"/><circle cx="14.4" cy="4.6" r="0.8" fill="#2a2e6e"/><path d="M0 7.6 Q2.4 5.8 4.8 7.6 T9.6 7.6 T14.4 7.6 T19.2 7.6 T24 7.6 T28.9 7.6" fill="none" stroke="#7f83aa" stroke-width="1.1"/><circle cx="2" cy="10.6" r="2.1" fill="none" stroke="#6e729c" stroke-width="1.1"/><circle cx="11.5" cy="10.6" r="2.1" fill="none" stroke="#6e729c" stroke-width="1.1"/><circle cx="17" cy="10.6" r="2.1" fill="none" stroke="#6e729c" stroke-width="1.1"/><circle cx="2.3" cy="11.5" r="1.35" fill="#161a5c"/><circle cx="11.8" cy="11.5" r="1.35" fill="#161a5c"/><circle cx="17.3" cy="11.5" r="1.35" fill="#161a5c"/><circle cx="6.8" cy="12.6" r="0.8" fill="#5d6190"/><path d="M21.5 6.5 L26.5 13.5 M26.5 6.5 L21.5 13.5" stroke="#6a6e99" stroke-width="1.2"/><path d="M24 8 L25.4 10 L24 12 L22.6 10 Z" fill="#8e91b3"/><path d="M0 13.9 H28.9" stroke="#8c8fb3" stroke-width="0.9"/></g></pattern><pattern id="ornR" x="277.6" y="9.8" width="14.4" height="28.9" patternUnits="userSpaceOnUse"><g transform="matrix(0 1 -1 0 14.4 0)"><path d="M0 2.2 Q2.4 -0.6 4.8 2.2 T9.6 2.2 T14.4 2.2 T19.2 2.2 T24 2.2 T28.9 2.2" fill="none" stroke="#7478a0" stroke-width="1.5"/><circle cx="4.8" cy="4.6" r="2.2" fill="#b9bcd2" stroke="#5d6190" stroke-width="1.3"/><circle cx="9.6" cy="4.6" r="2.2" fill="#d6d8e6" stroke="#6a6e99" stroke-width="1.3"/><circle cx="14.4" cy="4.6" r="2.2" fill="#b9bcd2" stroke="#5d6190" stroke-width="1.3"/><circle cx="19.2" cy="4.6" r="2.2" fill="#d6d8e6" stroke="#6a6e99" stroke-width="1.3"/><circle cx="24" cy="4.6" r="2.2" fill="none" stroke="#7478a0" stroke-width="1.2"/><circle cx="4.8" cy="4.6" r="0.8" fill="#2a2e6e"/><circle cx="14.4" cy="4.6" r="0.8" fill="#2a2e6e"/><path d="M0 7.6 Q2.4 5.8 4.8 7.6 T9.6 7.6 T14.4 7.6 T19.2 7.6 T24 7.6 T28.9 7.6" fill="none" stroke="#7f83aa" stroke-width="1.1"/><circle cx="2" cy="10.6" r="2.1" fill="none" stroke="#6e729c" stroke-width="1.1"/><circle cx="11.5" cy="10.6" r="2.1" fill="none" stroke="#6e729c" stroke-width="1.1"/><circle cx="17" cy="10.6" r="2.1" fill="none" stroke="#6e729c" stroke-width="1.1"/><circle cx="2.3" cy="11.5" r="1.35" fill="#161a5c"/><circle cx="11.8" cy="11.5" r="1.35" fill="#161a5c"/><circle cx="17.3" cy="11.5" r="1.35" fill="#161a5c"/><circle cx="6.8" cy="12.6" r="0.8" fill="#5d6190"/><path d="M21.5 6.5 L26.5 13.5 M26.5 6.5 L21.5 13.5" stroke="#6a6e99" stroke-width="1.2"/><path d="M24 8 L25.4 10 L24 12 L22.6 10 Z" fill="#8e91b3"/><path d="M0 13.9 H28.9" stroke="#8c8fb3" stroke-width="0.9"/></g></pattern></defs></svg>
<div class="r" style="left:27px;top:180px;width:300px;height:423px;box-sizing:border-box;border:1px solid #b6b6b6;background:#fff;overflow:hidden;">
<div class="r" style="left:-1px;top:-1px;width:300px;height:423px;">
<svg class="ic" style="left:0;top:0" width="300" height="423" viewBox="0 0 300 423"><rect x="22" y="9.8" width="256" height="14.4" fill="url(#ornT)"/><rect x="22" y="398.1" width="256" height="14.4" fill="url(#ornB)"/><rect x="7.8" y="9.8" width="14.4" height="402.7" fill="url(#ornL)"/><rect x="277.6" y="9.8" width="14.4" height="402.7" fill="url(#ornR)"/><rect x="22.6" y="24.4" width="255" height="373.6" fill="none" stroke="#1f2468" stroke-width="1.1"/><rect x="25.6" y="26.9" width="248.6" height="368.2" fill="none" stroke="#a6a8c9" stroke-width="1.2"/></svg>
<svg class="ic" style="left:126.8px;top:30.9px;" width="46" height="47" viewBox="0 0 46 47"><path d="M22.6 0 C23.8 2.5 24.6 4.5 24.2 7 C24 8.5 23.4 9.4 22.6 10 C21.8 9.4 21.2 8.5 21 7 C20.6 4.5 21.4 2.5 22.6 0 Z" fill="#1515f0"/><path d="M18.9 3.1 C17.4 5 17.2 7.4 17.8 9.2 C18.6 11.3 20.6 12.4 22.6 12.6 C24.6 12.4 26.6 11.3 27.4 9.2 C28 7.4 27.8 5 26.3 3.1 C26.4 5.2 26.2 7.6 25 9.2 C24.2 10.2 23.4 10.6 22.6 10.6 C21.8 10.6 21 10.2 20.2 9.2 C19 7.6 18.8 5.2 18.9 3.1 Z" fill="#1515f0"/><path d="M21.7 11 H23.5 L24 38.5 H21.2 Z" fill="#1515f0"/><path d="M18.8 15.8 H26.4" stroke="#6f6ff2" stroke-width="0.7"/><path d="M14.6 12.4 C10 17 7.6 22 8.1 26.5 C8.8 32 14 35.6 22.6 38.4 C31 35.6 36.6 32.5 37.8 27 C38.6 22.5 35.5 17.5 31 13.4 L29.3 14.9 C31.8 18.5 33.2 22.4 32.7 25.8 C32 29 29 30.6 24.8 31.2 L22.6 32 L20.5 31.2 C16 30.4 12.9 28.6 12.4 25 C11.9 21.5 13.6 17.8 16.4 14.6 Z" fill="#1515f0"/><path d="M10.5 27 C11.5 32 16 34 22 36 M34.8 27 C34 31.5 30 34 23.5 36" fill="none" stroke="#8c8cf7" stroke-width="0.5"/><path d="M12.2 10.8 C13.8 9.2 16.2 9.2 17.2 10.8 C17.8 12 17 13.5 16.2 14.6 L14.6 12.4 L12 13.4 L9 14.2 L10.4 12.5 Z" fill="#1515f0"/><path d="M30.8 9 L33.6 13.6 L31.6 14.8 L30 14.6 L28.2 13.6 Z" fill="#1515f0"/><path d="M0.3 38.2 L3 35 L1.8 32 L8.8 34.5 C14 37.5 31 37.5 36.4 34.5 L43.6 32 L42.4 35 L45.3 38.2 L38.5 39.2 C34 44.8 11.2 44.8 6.8 39.2 Z" fill="#ffffff" stroke="#1515f0" stroke-width="0.9"/><path d="M6.8 39.2 C12 37.6 33 37.6 38.5 39.2" fill="none" stroke="#1515f0" stroke-width="0.7"/><path d="M9.5 40.6 C15 43 30 43 35.8 40.6" fill="none" stroke="#5a5af0" stroke-width="1.3" stroke-dasharray="1.3 0.5"/></svg>
<div class="t" style="left:0;width:300px;text-align:center;top:85.29px;font-size:27px;font-weight:700;color:#d6402a;font-family:'Liberation Serif', serif;transform:scaleX(0.91);transform-origin:150px 0;">ӨРГӨМЖЛӨЛ</div>
<div class="t" style="left:51.9px;top:121.65px;font-size:12px;color:#111;font-weight:700;font-family:'Liberation Serif', serif;">Эрхэм хүндэт</div>
<div class="r" style="left:135.2px;top:133px;width:67px;height:1px;background:#111;"></div>
<div class="t" style="left:209.3px;top:121.65px;font-size:12px;color:#111;font-weight:700;font-family:'Liberation Serif', serif;">багийн</div>
<div class="t" style="left:119.8px;top:137.85px;font-size:12px;color:#111;font-weight:700;font-family:'Liberation Serif', serif;">хамт олонд</div>
<div class="t" style="left:0;width:300px;text-align:center;top:168.25px;font-size:12px;font-weight:700;color:#111;font-family:'Liberation Serif', serif;padding-left:1px;box-sizing:border-box;transform:scaleX(0.958);transform-origin:150.5px 0;">Хатгал тосгоны Соёлын төвөөс  уламжлал</div>
<div class="t" style="left:0;width:300px;text-align:center;top:186.67px;font-size:12px;font-weight:700;color:#111;font-family:'Liberation Serif', serif;padding-left:1px;box-sizing:border-box;transform:scaleX(0.958);transform-origin:150.5px 0;">болгон зохион байгуулдаг  “ХАВРЫН</div>
<div class="t" style="left:0;width:300px;text-align:center;top:205.09px;font-size:12px;font-weight:700;color:#111;font-family:'Liberation Serif', serif;padding-left:1px;box-sizing:border-box;transform:scaleX(0.958);transform-origin:150.5px 0;">УЯНГА”  урлаг, спортын  наадмын  эмэгтэй</div>
<div class="t" style="left:0;width:300px;text-align:center;top:223.51px;font-size:12px;font-weight:700;color:#111;font-family:'Liberation Serif', serif;padding-left:1px;box-sizing:border-box;transform:scaleX(0.958);transform-origin:150.5px 0;"><span style="color:#d6402a">“ШАГАЙН ХАРВАА” -</span>ны төрөлд амжилттай</div>
<div class="t" style="left:0;width:300px;text-align:center;top:241.93px;font-size:12px;font-weight:700;color:#111;font-family:'Liberation Serif', serif;padding-left:1px;box-sizing:border-box;transform:scaleX(0.958);transform-origin:150.5px 0;">оролцож <span style="color:#d6402a">"ГУТГААР"</span> байр эзэлсэн тул</div>
<div class="t" style="left:0;width:300px;text-align:center;top:260.35px;font-size:12px;font-weight:700;color:#111;font-family:'Liberation Serif', serif;padding-left:1px;box-sizing:border-box;transform:scaleX(0.958);transform-origin:150.5px 0;">өргөмжлөл,  хүрэл  медалиар шагнав.</div>
<div class="r" style="left:60px;top:389.3px;width:207px;height:1px;background:repeating-linear-gradient(90deg,#e4e4ee 0 1px,transparent 1px 5px);"></div>
<svg class="ic" style="left:28px;top:272px" width="110" height="130" viewBox="0 0 875 1034"><path d="M288 72 L312 74 L270 368 L246 362 Z" fill="#a02a5c" stroke="#1a1a1a" stroke-width="9"/><path d="M58 910 L186 832 L240 870 L348 925 L412 978 L94 980 L62 958 Z" fill="#2f63b0" stroke="#1a1a1a" stroke-width="9" stroke-linejoin="round"/><path d="M120 930 L200 860 M150 950 L230 880" stroke="#8aa0c8" stroke-width="5"/><path d="M292 325 L330 312 L452 368 L522 455 L578 520 L592 600 L590 668 L520 700 L487 712 L498 818 L466 850 L342 893 L228 850 L202 796 L196 634 L220 470 Z" fill="#cf2676" stroke="#1a1a1a" stroke-width="15" stroke-linejoin="round"/><path d="M246 560 L300 680 L330 700 M300 700 L420 642 L487 610 M420 642 L380 720 L487 712 M360 420 L400 480 L430 560 L380 630 M470 470 L510 540 M230 760 L300 800 M452 368 L400 330" fill="none" stroke="#1a1a1a" stroke-width="12" stroke-linejoin="round"/><path d="M410 745 L470 745 L520 720" fill="none" stroke="#1a1a1a" stroke-width="18"/><path d="M482 724 L612 712 L600 800 L690 818 L662 872 L541 880 L496 822 Z" fill="#2f63b0" stroke="#1a1a1a" stroke-width="11" stroke-linejoin="round"/><path d="M548 864 L655 860" stroke="#ffffff" stroke-width="6"/><path d="M342 908 L487 855 L525 908 L509 957 L401 962 L342 946 Z" fill="#a8c650" stroke="#1a1a1a" stroke-width="9" stroke-linejoin="round"/><path d="M595 569 L702 574 L708 628 L670 655 L605 644 Z" fill="#a8c650" stroke="#1a1a1a" stroke-width="9" stroke-linejoin="round"/><path d="M630 490 L720 500 L800 512 L800 534 L720 540 L645 552 Z" fill="#3d3a52" stroke="#1a1a1a" stroke-width="6"/><path d="M589 494 L643 494 L638 558 L595 558 Z" fill="#f7e0c6" stroke="#1a1a1a" stroke-width="7"/><path d="M334 315 L457 368 L430 385 L330 340 Z" fill="#1a1a1a"/><path d="M350 205 L480 208 L506 246 L502 292 L490 322 L455 336 L400 330 L368 300 L356 250 Z" fill="#f5d294" stroke="#1a1a1a" stroke-width="6"/><path d="M470 240 L490 242" stroke="#1a1a1a" stroke-width="6"/><path d="M312 205 L390 210 L384 250 L396 330 L360 318 L330 290 L312 240 Z" fill="#1a1a1a"/><path d="M340 240 L360 300 M360 230 L375 300" stroke="#f5d294" stroke-width="7"/><path d="M298 106 C316 74 380 66 444 98 C484 120 506 148 508 172 C470 152 380 122 298 106 Z" fill="#f2ac78" stroke="#1a1a1a" stroke-width="8" stroke-linejoin="round"/><path d="M360 100 C380 88 420 95 445 118 C430 128 400 126 372 116 Z" fill="#1a1a1a"/><path d="M296 104 C380 120 470 150 508 172 L492 204 C440 196 360 186 304 176 Z" fill="#2f63b0" stroke="#1a1a1a" stroke-width="10" stroke-linejoin="round"/><path d="M376 44 L396 52 L408 110 L382 108 Z" fill="#1a1a1a"/></svg>
<svg class="ic" style="left:171.9px;top:304.6px" width="63" height="62" viewBox="0 0 63 62"><path d="M1.5 1.8 Q20 0.8 61.3 1.5 Q62 30 61.6 60.5 Q30 61.2 1.8 60.7 Q0.9 30 1.5 1.8 Z" fill="none" stroke="#9c3a60" stroke-width="2.6"/><path d="M16 5 V44 M16 8 h-2.2 M16 12 h2 M16 16 h-2.2 M16 20 h2 M16 24 h-2.2 M16 28 h2 M16 32 h-2.2 M16 36 h2 M16 40 h-2.2" fill="none" stroke="#a85478" stroke-width="1.3"/><path d="M31 5 V45 M31 8 h-2.2 M31 12 h2 M31 16 h-2.2 M31 20 h2 M31 24 h-2.2 M31 28 h2 M31 32 h-2.2 M31 36 h2 M31 40 h-2.2" fill="none" stroke="#a85478" stroke-width="1.3"/><path d="M44.6 5 V43 M44.6 8 h-2.2 M44.6 12 h2 M44.6 16 h-2.2 M44.6 20 h2 M44.6 24 h-2.2 M44.6 28 h2 M44.6 32 h-2.2 M44.6 36 h2 M44.6 40 h-2.2" fill="none" stroke="#a85478" stroke-width="1.3"/><path d="M15 49 q2 3 4 1 M30 49 q2 3 3 0" fill="none" stroke="#a85478" stroke-width="1.3"/><text x="31.5" y="58.6" font-size="4.2" text-anchor="middle" fill="#a24a6e" font-family="Liberation Sans" font-weight="700">РЕГ№0001 3000008</text></svg>
<div class="t" style="left:152px;width:100px;text-align:center;top:322.46px;font-size:5.7px;font-weight:400;color:#000;-webkit-text-stroke:0.15px #000;font-family:'Liberation Sans', sans-serif;">Зохион байгуулагч:</div>
<div class="t" style="left:152px;width:100px;text-align:center;top:332.36px;font-size:5.7px;font-weight:400;color:#000;-webkit-text-stroke:0.15px #000;font-family:'Liberation Sans', sans-serif;">ХАТГАЛ СОЁЛЫН ТӨВ</div>
<div class="t" style="left:152px;width:100px;text-align:center;top:341.56px;font-size:5.7px;font-weight:400;color:#000;-webkit-text-stroke:0.15px #000;font-family:'Liberation Sans', sans-serif;">ДАРГА  Б.НАРАНТУЯА</div>
<div class="t" style="left:143.4px;top:380.83px;font-size:8px;color:#111;font-weight:700;font-family:'Liberation Sans', sans-serif;">2026.03.18</div>
<div class="r" style="left:245.1px;top:376.6px;width:2px;height:1.6px;background:#e23a2a;"></div>
</div></div>
<div class="t" style="left:28.6px;top:608.30px;font-size:15px;color:#444444;font-weight:400;font-family:'Liberation Sans', sans-serif;">1</div>
<div class="r" style="left:362px;top:180px;width:300px;height:423px;box-sizing:border-box;border:1px solid #b6b6b6;background:#fff;overflow:hidden;">
<div class="r" style="left:-1px;top:-1px;width:300px;height:423px;">
<svg class="ic" style="left:0;top:0" width="300" height="423" viewBox="0 0 300 423"><rect x="22" y="9.8" width="256" height="14.4" fill="url(#ornT)"/><rect x="22" y="398.1" width="256" height="14.4" fill="url(#ornB)"/><rect x="7.8" y="9.8" width="14.4" height="402.7" fill="url(#ornL)"/><rect x="277.6" y="9.8" width="14.4" height="402.7" fill="url(#ornR)"/><rect x="22.6" y="24.4" width="255" height="373.6" fill="none" stroke="#1f2468" stroke-width="1.1"/><rect x="25.6" y="26.9" width="248.6" height="368.2" fill="none" stroke="#a6a8c9" stroke-width="1.2"/></svg>
<svg class="ic" style="left:126.8px;top:30.9px;" width="46" height="47" viewBox="0 0 46 47"><path d="M22.6 0 C23.8 2.5 24.6 4.5 24.2 7 C24 8.5 23.4 9.4 22.6 10 C21.8 9.4 21.2 8.5 21 7 C20.6 4.5 21.4 2.5 22.6 0 Z" fill="#1515f0"/><path d="M18.9 3.1 C17.4 5 17.2 7.4 17.8 9.2 C18.6 11.3 20.6 12.4 22.6 12.6 C24.6 12.4 26.6 11.3 27.4 9.2 C28 7.4 27.8 5 26.3 3.1 C26.4 5.2 26.2 7.6 25 9.2 C24.2 10.2 23.4 10.6 22.6 10.6 C21.8 10.6 21 10.2 20.2 9.2 C19 7.6 18.8 5.2 18.9 3.1 Z" fill="#1515f0"/><path d="M21.7 11 H23.5 L24 38.5 H21.2 Z" fill="#1515f0"/><path d="M18.8 15.8 H26.4" stroke="#6f6ff2" stroke-width="0.7"/><path d="M14.6 12.4 C10 17 7.6 22 8.1 26.5 C8.8 32 14 35.6 22.6 38.4 C31 35.6 36.6 32.5 37.8 27 C38.6 22.5 35.5 17.5 31 13.4 L29.3 14.9 C31.8 18.5 33.2 22.4 32.7 25.8 C32 29 29 30.6 24.8 31.2 L22.6 32 L20.5 31.2 C16 30.4 12.9 28.6 12.4 25 C11.9 21.5 13.6 17.8 16.4 14.6 Z" fill="#1515f0"/><path d="M10.5 27 C11.5 32 16 34 22 36 M34.8 27 C34 31.5 30 34 23.5 36" fill="none" stroke="#8c8cf7" stroke-width="0.5"/><path d="M12.2 10.8 C13.8 9.2 16.2 9.2 17.2 10.8 C17.8 12 17 13.5 16.2 14.6 L14.6 12.4 L12 13.4 L9 14.2 L10.4 12.5 Z" fill="#1515f0"/><path d="M30.8 9 L33.6 13.6 L31.6 14.8 L30 14.6 L28.2 13.6 Z" fill="#1515f0"/><path d="M0.3 38.2 L3 35 L1.8 32 L8.8 34.5 C14 37.5 31 37.5 36.4 34.5 L43.6 32 L42.4 35 L45.3 38.2 L38.5 39.2 C34 44.8 11.2 44.8 6.8 39.2 Z" fill="#ffffff" stroke="#1515f0" stroke-width="0.9"/><path d="M6.8 39.2 C12 37.6 33 37.6 38.5 39.2" fill="none" stroke="#1515f0" stroke-width="0.7"/><path d="M9.5 40.6 C15 43 30 43 35.8 40.6" fill="none" stroke="#5a5af0" stroke-width="1.3" stroke-dasharray="1.3 0.5"/></svg>
<div class="t" style="left:0;width:300px;text-align:center;top:85.29px;font-size:27px;font-weight:700;color:#d6402a;font-family:'Liberation Serif', serif;transform:scaleX(0.91);transform-origin:150px 0;">ӨРГӨМЖЛӨЛ</div>
<div class="t" style="left:51.9px;top:121.65px;font-size:12px;color:#111;font-weight:700;font-family:'Liberation Serif', serif;">Эрхэм хүндэт</div>
<div class="r" style="left:135.2px;top:133px;width:67px;height:1px;background:#111;"></div>
<div class="t" style="left:209.3px;top:121.65px;font-size:12px;color:#111;font-weight:700;font-family:'Liberation Serif', serif;">багийн</div>
<div class="t" style="left:119.8px;top:137.85px;font-size:12px;color:#111;font-weight:700;font-family:'Liberation Serif', serif;">хамт олонд</div>
<div class="t" style="left:0;width:300px;text-align:center;top:168.25px;font-size:12px;font-weight:700;color:#111;font-family:'Liberation Serif', serif;padding-left:1px;box-sizing:border-box;transform:scaleX(0.958);transform-origin:150.5px 0;">Хатгал тосгоны Соёлын төвөөс  уламжлал</div>
<div class="t" style="left:0;width:300px;text-align:center;top:186.67px;font-size:12px;font-weight:700;color:#111;font-family:'Liberation Serif', serif;padding-left:1px;box-sizing:border-box;transform:scaleX(0.958);transform-origin:150.5px 0;">болгон зохион байгуулдаг  “ХАВРЫН</div>
<div class="t" style="left:0;width:300px;text-align:center;top:205.09px;font-size:12px;font-weight:700;color:#111;font-family:'Liberation Serif', serif;padding-left:1px;box-sizing:border-box;transform:scaleX(0.958);transform-origin:150.5px 0;">УЯНГА”  урлаг, спортын  наадмын  эмэгтэй</div>
<div class="t" style="left:0;width:300px;text-align:center;top:223.51px;font-size:12px;font-weight:700;color:#111;font-family:'Liberation Serif', serif;padding-left:1px;box-sizing:border-box;transform:scaleX(0.958);transform-origin:150.5px 0;"><span style="color:#d6402a">“ШАГАЙН ХАРВАА” -</span>ны төрөлд амжилттай</div>
<div class="t" style="left:0;width:300px;text-align:center;top:241.93px;font-size:12px;font-weight:700;color:#111;font-family:'Liberation Serif', serif;padding-left:1px;box-sizing:border-box;transform:scaleX(0.958);transform-origin:150.5px 0;">оролцож <span style="color:#d6402a">"ДЭД"</span> байр эзэлсэн тул</div>
<div class="t" style="left:0;width:300px;text-align:center;top:260.35px;font-size:12px;font-weight:700;color:#111;font-family:'Liberation Serif', serif;padding-left:1px;box-sizing:border-box;transform:scaleX(0.958);transform-origin:150.5px 0;">өргөмжлөл,  мөнгөн  медалиар шагнав.</div>
<div class="r" style="left:60px;top:389.3px;width:207px;height:1px;background:repeating-linear-gradient(90deg,#e4e4ee 0 1px,transparent 1px 5px);"></div>
<svg class="ic" style="left:28px;top:272px" width="110" height="130" viewBox="0 0 875 1034"><path d="M288 72 L312 74 L270 368 L246 362 Z" fill="#a02a5c" stroke="#1a1a1a" stroke-width="9"/><path d="M58 910 L186 832 L240 870 L348 925 L412 978 L94 980 L62 958 Z" fill="#2f63b0" stroke="#1a1a1a" stroke-width="9" stroke-linejoin="round"/><path d="M120 930 L200 860 M150 950 L230 880" stroke="#8aa0c8" stroke-width="5"/><path d="M292 325 L330 312 L452 368 L522 455 L578 520 L592 600 L590 668 L520 700 L487 712 L498 818 L466 850 L342 893 L228 850 L202 796 L196 634 L220 470 Z" fill="#cf2676" stroke="#1a1a1a" stroke-width="15" stroke-linejoin="round"/><path d="M246 560 L300 680 L330 700 M300 700 L420 642 L487 610 M420 642 L380 720 L487 712 M360 420 L400 480 L430 560 L380 630 M470 470 L510 540 M230 760 L300 800 M452 368 L400 330" fill="none" stroke="#1a1a1a" stroke-width="12" stroke-linejoin="round"/><path d="M410 745 L470 745 L520 720" fill="none" stroke="#1a1a1a" stroke-width="18"/><path d="M482 724 L612 712 L600 800 L690 818 L662 872 L541 880 L496 822 Z" fill="#2f63b0" stroke="#1a1a1a" stroke-width="11" stroke-linejoin="round"/><path d="M548 864 L655 860" stroke="#ffffff" stroke-width="6"/><path d="M342 908 L487 855 L525 908 L509 957 L401 962 L342 946 Z" fill="#a8c650" stroke="#1a1a1a" stroke-width="9" stroke-linejoin="round"/><path d="M595 569 L702 574 L708 628 L670 655 L605 644 Z" fill="#a8c650" stroke="#1a1a1a" stroke-width="9" stroke-linejoin="round"/><path d="M630 490 L720 500 L800 512 L800 534 L720 540 L645 552 Z" fill="#3d3a52" stroke="#1a1a1a" stroke-width="6"/><path d="M589 494 L643 494 L638 558 L595 558 Z" fill="#f7e0c6" stroke="#1a1a1a" stroke-width="7"/><path d="M334 315 L457 368 L430 385 L330 340 Z" fill="#1a1a1a"/><path d="M350 205 L480 208 L506 246 L502 292 L490 322 L455 336 L400 330 L368 300 L356 250 Z" fill="#f5d294" stroke="#1a1a1a" stroke-width="6"/><path d="M470 240 L490 242" stroke="#1a1a1a" stroke-width="6"/><path d="M312 205 L390 210 L384 250 L396 330 L360 318 L330 290 L312 240 Z" fill="#1a1a1a"/><path d="M340 240 L360 300 M360 230 L375 300" stroke="#f5d294" stroke-width="7"/><path d="M298 106 C316 74 380 66 444 98 C484 120 506 148 508 172 C470 152 380 122 298 106 Z" fill="#f2ac78" stroke="#1a1a1a" stroke-width="8" stroke-linejoin="round"/><path d="M360 100 C380 88 420 95 445 118 C430 128 400 126 372 116 Z" fill="#1a1a1a"/><path d="M296 104 C380 120 470 150 508 172 L492 204 C440 196 360 186 304 176 Z" fill="#2f63b0" stroke="#1a1a1a" stroke-width="10" stroke-linejoin="round"/><path d="M376 44 L396 52 L408 110 L382 108 Z" fill="#1a1a1a"/></svg>
<svg class="ic" style="left:171.9px;top:304.6px" width="63" height="62" viewBox="0 0 63 62"><path d="M1.5 1.8 Q20 0.8 61.3 1.5 Q62 30 61.6 60.5 Q30 61.2 1.8 60.7 Q0.9 30 1.5 1.8 Z" fill="none" stroke="#9c3a60" stroke-width="2.6"/><path d="M16 5 V44 M16 8 h-2.2 M16 12 h2 M16 16 h-2.2 M16 20 h2 M16 24 h-2.2 M16 28 h2 M16 32 h-2.2 M16 36 h2 M16 40 h-2.2" fill="none" stroke="#a85478" stroke-width="1.3"/><path d="M31 5 V45 M31 8 h-2.2 M31 12 h2 M31 16 h-2.2 M31 20 h2 M31 24 h-2.2 M31 28 h2 M31 32 h-2.2 M31 36 h2 M31 40 h-2.2" fill="none" stroke="#a85478" stroke-width="1.3"/><path d="M44.6 5 V43 M44.6 8 h-2.2 M44.6 12 h2 M44.6 16 h-2.2 M44.6 20 h2 M44.6 24 h-2.2 M44.6 28 h2 M44.6 32 h-2.2 M44.6 36 h2 M44.6 40 h-2.2" fill="none" stroke="#a85478" stroke-width="1.3"/><path d="M15 49 q2 3 4 1 M30 49 q2 3 3 0" fill="none" stroke="#a85478" stroke-width="1.3"/><text x="31.5" y="58.6" font-size="4.2" text-anchor="middle" fill="#a24a6e" font-family="Liberation Sans" font-weight="700">РЕГ№0001 3000008</text></svg>
<div class="t" style="left:152px;width:100px;text-align:center;top:322.46px;font-size:5.7px;font-weight:400;color:#000;-webkit-text-stroke:0.15px #000;font-family:'Liberation Sans', sans-serif;">Зохион байгуулагч:</div>
<div class="t" style="left:152px;width:100px;text-align:center;top:332.36px;font-size:5.7px;font-weight:400;color:#000;-webkit-text-stroke:0.15px #000;font-family:'Liberation Sans', sans-serif;">ХАТГАЛ СОЁЛЫН ТӨВ</div>
<div class="t" style="left:152px;width:100px;text-align:center;top:341.56px;font-size:5.7px;font-weight:400;color:#000;-webkit-text-stroke:0.15px #000;font-family:'Liberation Sans', sans-serif;">ДАРГА  Б.НАРАНТУЯА</div>
<div class="t" style="left:143.4px;top:380.83px;font-size:8px;color:#111;font-weight:700;font-family:'Liberation Sans', sans-serif;">2026.03.18</div>
<div class="r" style="left:245.1px;top:376.6px;width:2px;height:1.6px;background:#e23a2a;"></div>
</div></div>
<div class="t" style="left:363.6px;top:608.30px;font-size:15px;color:#444444;font-weight:400;font-family:'Liberation Sans', sans-serif;">2</div>
<div class="r" style="left:697px;top:180px;width:300px;height:423px;box-sizing:border-box;border:1px solid #b6b6b6;background:#fff;overflow:hidden;">
<div class="r" style="left:-1px;top:-1px;width:300px;height:423px;">
<svg class="ic" style="left:0;top:0" width="300" height="423" viewBox="0 0 300 423"><rect x="22" y="9.8" width="256" height="14.4" fill="url(#ornT)"/><rect x="22" y="398.1" width="256" height="14.4" fill="url(#ornB)"/><rect x="7.8" y="9.8" width="14.4" height="402.7" fill="url(#ornL)"/><rect x="277.6" y="9.8" width="14.4" height="402.7" fill="url(#ornR)"/><rect x="22.6" y="24.4" width="255" height="373.6" fill="none" stroke="#1f2468" stroke-width="1.1"/><rect x="25.6" y="26.9" width="248.6" height="368.2" fill="none" stroke="#a6a8c9" stroke-width="1.2"/></svg>
<svg class="ic" style="left:126.8px;top:30.9px;" width="46" height="47" viewBox="0 0 46 47"><path d="M22.6 0 C23.8 2.5 24.6 4.5 24.2 7 C24 8.5 23.4 9.4 22.6 10 C21.8 9.4 21.2 8.5 21 7 C20.6 4.5 21.4 2.5 22.6 0 Z" fill="#1515f0"/><path d="M18.9 3.1 C17.4 5 17.2 7.4 17.8 9.2 C18.6 11.3 20.6 12.4 22.6 12.6 C24.6 12.4 26.6 11.3 27.4 9.2 C28 7.4 27.8 5 26.3 3.1 C26.4 5.2 26.2 7.6 25 9.2 C24.2 10.2 23.4 10.6 22.6 10.6 C21.8 10.6 21 10.2 20.2 9.2 C19 7.6 18.8 5.2 18.9 3.1 Z" fill="#1515f0"/><path d="M21.7 11 H23.5 L24 38.5 H21.2 Z" fill="#1515f0"/><path d="M18.8 15.8 H26.4" stroke="#6f6ff2" stroke-width="0.7"/><path d="M14.6 12.4 C10 17 7.6 22 8.1 26.5 C8.8 32 14 35.6 22.6 38.4 C31 35.6 36.6 32.5 37.8 27 C38.6 22.5 35.5 17.5 31 13.4 L29.3 14.9 C31.8 18.5 33.2 22.4 32.7 25.8 C32 29 29 30.6 24.8 31.2 L22.6 32 L20.5 31.2 C16 30.4 12.9 28.6 12.4 25 C11.9 21.5 13.6 17.8 16.4 14.6 Z" fill="#1515f0"/><path d="M10.5 27 C11.5 32 16 34 22 36 M34.8 27 C34 31.5 30 34 23.5 36" fill="none" stroke="#8c8cf7" stroke-width="0.5"/><path d="M12.2 10.8 C13.8 9.2 16.2 9.2 17.2 10.8 C17.8 12 17 13.5 16.2 14.6 L14.6 12.4 L12 13.4 L9 14.2 L10.4 12.5 Z" fill="#1515f0"/><path d="M30.8 9 L33.6 13.6 L31.6 14.8 L30 14.6 L28.2 13.6 Z" fill="#1515f0"/><path d="M0.3 38.2 L3 35 L1.8 32 L8.8 34.5 C14 37.5 31 37.5 36.4 34.5 L43.6 32 L42.4 35 L45.3 38.2 L38.5 39.2 C34 44.8 11.2 44.8 6.8 39.2 Z" fill="#ffffff" stroke="#1515f0" stroke-width="0.9"/><path d="M6.8 39.2 C12 37.6 33 37.6 38.5 39.2" fill="none" stroke="#1515f0" stroke-width="0.7"/><path d="M9.5 40.6 C15 43 30 43 35.8 40.6" fill="none" stroke="#5a5af0" stroke-width="1.3" stroke-dasharray="1.3 0.5"/></svg>
<div class="t" style="left:0;width:300px;text-align:center;top:85.29px;font-size:27px;font-weight:700;color:#d6402a;font-family:'Liberation Serif', serif;transform:scaleX(0.91);transform-origin:150px 0;">ӨРГӨМЖЛӨЛ</div>
<div class="t" style="left:51.9px;top:121.65px;font-size:12px;color:#111;font-weight:700;font-family:'Liberation Serif', serif;">Эрхэм хүндэт</div>
<div class="r" style="left:135.2px;top:133px;width:67px;height:1px;background:#111;"></div>
<div class="t" style="left:209.3px;top:121.65px;font-size:12px;color:#111;font-weight:700;font-family:'Liberation Serif', serif;">багийн</div>
<div class="t" style="left:119.8px;top:137.85px;font-size:12px;color:#111;font-weight:700;font-family:'Liberation Serif', serif;">хамт олонд</div>
<div class="t" style="left:0;width:300px;text-align:center;top:168.25px;font-size:12px;font-weight:700;color:#111;font-family:'Liberation Serif', serif;padding-left:1px;box-sizing:border-box;transform:scaleX(0.958);transform-origin:150.5px 0;">Хатгал тосгоны Соёлын төвөөс  уламжлал</div>
<div class="t" style="left:0;width:300px;text-align:center;top:186.67px;font-size:12px;font-weight:700;color:#111;font-family:'Liberation Serif', serif;padding-left:1px;box-sizing:border-box;transform:scaleX(0.958);transform-origin:150.5px 0;">болгон зохион байгуулдаг  “ХАВРЫН</div>
<div class="t" style="left:0;width:300px;text-align:center;top:205.09px;font-size:12px;font-weight:700;color:#111;font-family:'Liberation Serif', serif;padding-left:1px;box-sizing:border-box;transform:scaleX(0.958);transform-origin:150.5px 0;">УЯНГА”  урлаг, спортын  наадмын  эмэгтэй</div>
<div class="t" style="left:0;width:300px;text-align:center;top:223.51px;font-size:12px;font-weight:700;color:#111;font-family:'Liberation Serif', serif;padding-left:1px;box-sizing:border-box;transform:scaleX(0.958);transform-origin:150.5px 0;"><span style="color:#d6402a">“ШАГАЙН ХАРВАА” -</span>ны төрөлд амжилттай</div>
<div class="t" style="left:0;width:300px;text-align:center;top:241.93px;font-size:12px;font-weight:700;color:#111;font-family:'Liberation Serif', serif;padding-left:1px;box-sizing:border-box;transform:scaleX(0.958);transform-origin:150.5px 0;">оролцож <span style="color:#d6402a">"ТЭРГҮҮН"</span> байр эзэлсэн тул</div>
<div class="t" style="left:0;width:300px;text-align:center;top:260.35px;font-size:12px;font-weight:700;color:#111;font-family:'Liberation Serif', serif;padding-left:1px;box-sizing:border-box;transform:scaleX(0.958);transform-origin:150.5px 0;">өргөмжлөл,  алтан  медалиар шагнав.</div>
<div class="r" style="left:60px;top:389.3px;width:207px;height:1px;background:repeating-linear-gradient(90deg,#e4e4ee 0 1px,transparent 1px 5px);"></div>
<svg class="ic" style="left:28px;top:272px" width="110" height="130" viewBox="0 0 875 1034"><path d="M288 72 L312 74 L270 368 L246 362 Z" fill="#a02a5c" stroke="#1a1a1a" stroke-width="9"/><path d="M58 910 L186 832 L240 870 L348 925 L412 978 L94 980 L62 958 Z" fill="#2f63b0" stroke="#1a1a1a" stroke-width="9" stroke-linejoin="round"/><path d="M120 930 L200 860 M150 950 L230 880" stroke="#8aa0c8" stroke-width="5"/><path d="M292 325 L330 312 L452 368 L522 455 L578 520 L592 600 L590 668 L520 700 L487 712 L498 818 L466 850 L342 893 L228 850 L202 796 L196 634 L220 470 Z" fill="#cf2676" stroke="#1a1a1a" stroke-width="15" stroke-linejoin="round"/><path d="M246 560 L300 680 L330 700 M300 700 L420 642 L487 610 M420 642 L380 720 L487 712 M360 420 L400 480 L430 560 L380 630 M470 470 L510 540 M230 760 L300 800 M452 368 L400 330" fill="none" stroke="#1a1a1a" stroke-width="12" stroke-linejoin="round"/><path d="M410 745 L470 745 L520 720" fill="none" stroke="#1a1a1a" stroke-width="18"/><path d="M482 724 L612 712 L600 800 L690 818 L662 872 L541 880 L496 822 Z" fill="#2f63b0" stroke="#1a1a1a" stroke-width="11" stroke-linejoin="round"/><path d="M548 864 L655 860" stroke="#ffffff" stroke-width="6"/><path d="M342 908 L487 855 L525 908 L509 957 L401 962 L342 946 Z" fill="#a8c650" stroke="#1a1a1a" stroke-width="9" stroke-linejoin="round"/><path d="M595 569 L702 574 L708 628 L670 655 L605 644 Z" fill="#a8c650" stroke="#1a1a1a" stroke-width="9" stroke-linejoin="round"/><path d="M630 490 L720 500 L800 512 L800 534 L720 540 L645 552 Z" fill="#3d3a52" stroke="#1a1a1a" stroke-width="6"/><path d="M589 494 L643 494 L638 558 L595 558 Z" fill="#f7e0c6" stroke="#1a1a1a" stroke-width="7"/><path d="M334 315 L457 368 L430 385 L330 340 Z" fill="#1a1a1a"/><path d="M350 205 L480 208 L506 246 L502 292 L490 322 L455 336 L400 330 L368 300 L356 250 Z" fill="#f5d294" stroke="#1a1a1a" stroke-width="6"/><path d="M470 240 L490 242" stroke="#1a1a1a" stroke-width="6"/><path d="M312 205 L390 210 L384 250 L396 330 L360 318 L330 290 L312 240 Z" fill="#1a1a1a"/><path d="M340 240 L360 300 M360 230 L375 300" stroke="#f5d294" stroke-width="7"/><path d="M298 106 C316 74 380 66 444 98 C484 120 506 148 508 172 C470 152 380 122 298 106 Z" fill="#f2ac78" stroke="#1a1a1a" stroke-width="8" stroke-linejoin="round"/><path d="M360 100 C380 88 420 95 445 118 C430 128 400 126 372 116 Z" fill="#1a1a1a"/><path d="M296 104 C380 120 470 150 508 172 L492 204 C440 196 360 186 304 176 Z" fill="#2f63b0" stroke="#1a1a1a" stroke-width="10" stroke-linejoin="round"/><path d="M376 44 L396 52 L408 110 L382 108 Z" fill="#1a1a1a"/></svg>
<svg class="ic" style="left:171.9px;top:304.6px" width="63" height="62" viewBox="0 0 63 62"><path d="M1.5 1.8 Q20 0.8 61.3 1.5 Q62 30 61.6 60.5 Q30 61.2 1.8 60.7 Q0.9 30 1.5 1.8 Z" fill="none" stroke="#9c3a60" stroke-width="2.6"/><path d="M16 5 V44 M16 8 h-2.2 M16 12 h2 M16 16 h-2.2 M16 20 h2 M16 24 h-2.2 M16 28 h2 M16 32 h-2.2 M16 36 h2 M16 40 h-2.2" fill="none" stroke="#a85478" stroke-width="1.3"/><path d="M31 5 V45 M31 8 h-2.2 M31 12 h2 M31 16 h-2.2 M31 20 h2 M31 24 h-2.2 M31 28 h2 M31 32 h-2.2 M31 36 h2 M31 40 h-2.2" fill="none" stroke="#a85478" stroke-width="1.3"/><path d="M44.6 5 V43 M44.6 8 h-2.2 M44.6 12 h2 M44.6 16 h-2.2 M44.6 20 h2 M44.6 24 h-2.2 M44.6 28 h2 M44.6 32 h-2.2 M44.6 36 h2 M44.6 40 h-2.2" fill="none" stroke="#a85478" stroke-width="1.3"/><path d="M15 49 q2 3 4 1 M30 49 q2 3 3 0" fill="none" stroke="#a85478" stroke-width="1.3"/><text x="31.5" y="58.6" font-size="4.2" text-anchor="middle" fill="#a24a6e" font-family="Liberation Sans" font-weight="700">РЕГ№0001 3000008</text></svg>
<div class="t" style="left:152px;width:100px;text-align:center;top:322.46px;font-size:5.7px;font-weight:400;color:#000;-webkit-text-stroke:0.15px #000;font-family:'Liberation Sans', sans-serif;">Зохион байгуулагч:</div>
<div class="t" style="left:152px;width:100px;text-align:center;top:332.36px;font-size:5.7px;font-weight:400;color:#000;-webkit-text-stroke:0.15px #000;font-family:'Liberation Sans', sans-serif;">ХАТГАЛ СОЁЛЫН ТӨВ</div>
<div class="t" style="left:152px;width:100px;text-align:center;top:341.56px;font-size:5.7px;font-weight:400;color:#000;-webkit-text-stroke:0.15px #000;font-family:'Liberation Sans', sans-serif;">ДАРГА  Б.НАРАНТУЯА</div>
<div class="t" style="left:143.4px;top:380.83px;font-size:8px;color:#111;font-weight:700;font-family:'Liberation Sans', sans-serif;">2026.03.18</div>
<div class="r" style="left:245.1px;top:376.6px;width:2px;height:1.6px;background:#e23a2a;"></div>
</div></div>
<div class="t" style="left:698.6px;top:608.30px;font-size:15px;color:#444444;font-weight:400;font-family:'Liberation Sans', sans-serif;">3</div>
<div class="r" style="left:1013.5px;top:175px;width:1.4px;height:433px;background:#d6391f;"></div>
<svg class="ic" style="left:1011.5px;top:173px;" width="6" height="3" viewBox="0 0 6 3"><path d="M0 0 H6 L3.7 2.5 H2.3 Z" fill="#d6391f"/></svg>
<svg class="ic" style="left:1011.5px;top:607px;" width="6" height="3" viewBox="0 0 6 3"><path d="M0 3 H6 L3.7 0.5 H2.3 Z" fill="#d6391f"/></svg>
<div class="r" style="left:0px;top:1010px;width:1604px;height:1px;background:#cfcfcf;"></div>
<div class="r" style="left:0px;top:1011px;width:1596px;height:21px;background:#f3f3f3;"></div>
<div class="r" style="left:1596px;top:1011px;width:8px;height:21px;background:#dadada;"></div>
<div class="r" style="left:0px;top:1032px;width:1604px;height:1px;background:#bdbdbd;"></div>
<div class="r" style="left:0px;top:1033px;width:1604px;height:1px;background:#d9f1ee;"></div>
<div class="t" style="left:8.7px;top:1015.52px;font-size:11.2px;color:#444444;font-weight:400;font-family:'Liberation Sans', sans-serif;">Slide 3 of 3</div>
<div class="t" style="left:97.3px;top:1015.52px;font-size:11.2px;color:#444444;font-weight:400;font-family:'Liberation Sans', sans-serif;">English (United States)</div>
<svg class="ic" style="left:1569px;top:1015px;" width="14" height="12" viewBox="0 0 14 12"><path d="M0.5 0.5 H13.5 V11.5 H0.5 Z M3.5 0.5 V11.5 M3.5 8.5 H13.5" fill="none" stroke="#333" stroke-width="1.1"/><rect x="6.5" y="3.3" width="4" height="2" fill="none" stroke="#333" stroke-width="1"/></svg>
</body></html>
